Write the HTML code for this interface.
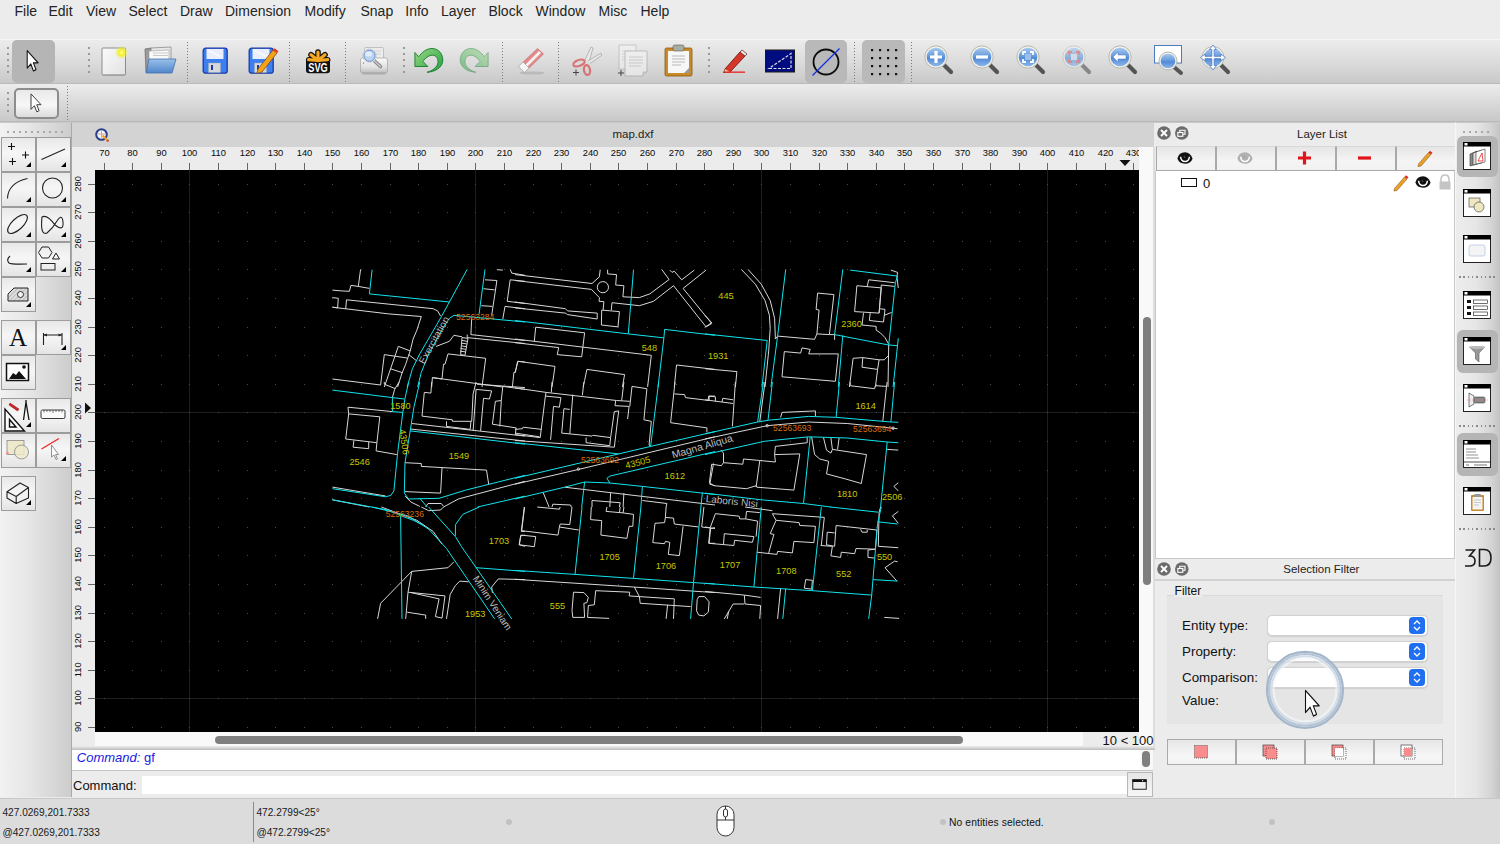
<!DOCTYPE html><html><head><meta charset="utf-8"><style>
*{margin:0;padding:0;box-sizing:border-box}
html,body{width:1500px;height:844px;overflow:hidden;background:#ececec;font-family:"Liberation Sans",sans-serif;position:relative}
.a{position:absolute}
.t{position:absolute;white-space:nowrap;line-height:1}
</style></head><body><div class="t" style="left:14.5px;top:4.15px;font-size:14px;color:#232323;">File</div>
<div class="t" style="left:48.5px;top:4.15px;font-size:14px;color:#232323;">Edit</div>
<div class="t" style="left:86px;top:4.15px;font-size:14px;color:#232323;">View</div>
<div class="t" style="left:128.5px;top:4.15px;font-size:14px;color:#232323;">Select</div>
<div class="t" style="left:180px;top:4.15px;font-size:14px;color:#232323;">Draw</div>
<div class="t" style="left:225px;top:4.15px;font-size:14px;color:#232323;">Dimension</div>
<div class="t" style="left:304.5px;top:4.15px;font-size:14px;color:#232323;">Modify</div>
<div class="t" style="left:360.5px;top:4.15px;font-size:14px;color:#232323;">Snap</div>
<div class="t" style="left:405.3px;top:4.15px;font-size:14px;color:#232323;">Info</div>
<div class="t" style="left:441px;top:4.15px;font-size:14px;color:#232323;">Layer</div>
<div class="t" style="left:488.4px;top:4.15px;font-size:14px;color:#232323;">Block</div>
<div class="t" style="left:535.5px;top:4.15px;font-size:14px;color:#232323;">Window</div>
<div class="t" style="left:598.5px;top:4.15px;font-size:14px;color:#232323;">Misc</div>
<div class="t" style="left:640.5px;top:4.15px;font-size:14px;color:#232323;">Help</div>
<div class="a" style="left:0px;top:39px;width:1500px;height:45px;background:linear-gradient(#ececec,#dcdcdc 50%,#c9c9c9);border-top:1px solid #f6f6f6;border-bottom:1px solid #b9b9b9"></div>
<div class="a" style="left:0px;top:84px;width:1500px;height:38px;background:linear-gradient(#ececec,#dadada 50%,#c8c8c8);border-bottom:1px solid #b9b9b9"></div>
<div class="a" style="left:7px;top:47px;width:2px;height:2px;background:#9a9a9a"></div>
<div class="a" style="left:7px;top:53px;width:2px;height:2px;background:#9a9a9a"></div>
<div class="a" style="left:7px;top:59px;width:2px;height:2px;background:#9a9a9a"></div>
<div class="a" style="left:7px;top:65px;width:2px;height:2px;background:#9a9a9a"></div>
<div class="a" style="left:7px;top:71px;width:2px;height:2px;background:#9a9a9a"></div>
<div class="a" style="left:88px;top:47px;width:2px;height:2px;background:#9a9a9a"></div>
<div class="a" style="left:88px;top:53px;width:2px;height:2px;background:#9a9a9a"></div>
<div class="a" style="left:88px;top:59px;width:2px;height:2px;background:#9a9a9a"></div>
<div class="a" style="left:88px;top:65px;width:2px;height:2px;background:#9a9a9a"></div>
<div class="a" style="left:88px;top:71px;width:2px;height:2px;background:#9a9a9a"></div>
<div class="a" style="left:403px;top:47px;width:2px;height:2px;background:#9a9a9a"></div>
<div class="a" style="left:403px;top:53px;width:2px;height:2px;background:#9a9a9a"></div>
<div class="a" style="left:403px;top:59px;width:2px;height:2px;background:#9a9a9a"></div>
<div class="a" style="left:403px;top:65px;width:2px;height:2px;background:#9a9a9a"></div>
<div class="a" style="left:403px;top:71px;width:2px;height:2px;background:#9a9a9a"></div>
<div class="a" style="left:708px;top:47px;width:2px;height:2px;background:#9a9a9a"></div>
<div class="a" style="left:708px;top:53px;width:2px;height:2px;background:#9a9a9a"></div>
<div class="a" style="left:708px;top:59px;width:2px;height:2px;background:#9a9a9a"></div>
<div class="a" style="left:708px;top:65px;width:2px;height:2px;background:#9a9a9a"></div>
<div class="a" style="left:708px;top:71px;width:2px;height:2px;background:#9a9a9a"></div>
<div class="a" style="left:187px;top:42px;width:1px;height:1px;background:#7a7a7a"></div><div class="a" style="left:187px;top:45px;width:1px;height:1px;background:#7a7a7a"></div><div class="a" style="left:187px;top:48px;width:1px;height:1px;background:#7a7a7a"></div><div class="a" style="left:187px;top:51px;width:1px;height:1px;background:#7a7a7a"></div><div class="a" style="left:187px;top:54px;width:1px;height:1px;background:#7a7a7a"></div><div class="a" style="left:187px;top:57px;width:1px;height:1px;background:#7a7a7a"></div><div class="a" style="left:187px;top:60px;width:1px;height:1px;background:#7a7a7a"></div><div class="a" style="left:187px;top:63px;width:1px;height:1px;background:#7a7a7a"></div><div class="a" style="left:187px;top:66px;width:1px;height:1px;background:#7a7a7a"></div><div class="a" style="left:187px;top:69px;width:1px;height:1px;background:#7a7a7a"></div><div class="a" style="left:187px;top:72px;width:1px;height:1px;background:#7a7a7a"></div><div class="a" style="left:187px;top:75px;width:1px;height:1px;background:#7a7a7a"></div><div class="a" style="left:187px;top:78px;width:1px;height:1px;background:#7a7a7a"></div><div class="a" style="left:187px;top:81px;width:1px;height:1px;background:#7a7a7a"></div>
<div class="a" style="left:289px;top:42px;width:1px;height:1px;background:#7a7a7a"></div><div class="a" style="left:289px;top:45px;width:1px;height:1px;background:#7a7a7a"></div><div class="a" style="left:289px;top:48px;width:1px;height:1px;background:#7a7a7a"></div><div class="a" style="left:289px;top:51px;width:1px;height:1px;background:#7a7a7a"></div><div class="a" style="left:289px;top:54px;width:1px;height:1px;background:#7a7a7a"></div><div class="a" style="left:289px;top:57px;width:1px;height:1px;background:#7a7a7a"></div><div class="a" style="left:289px;top:60px;width:1px;height:1px;background:#7a7a7a"></div><div class="a" style="left:289px;top:63px;width:1px;height:1px;background:#7a7a7a"></div><div class="a" style="left:289px;top:66px;width:1px;height:1px;background:#7a7a7a"></div><div class="a" style="left:289px;top:69px;width:1px;height:1px;background:#7a7a7a"></div><div class="a" style="left:289px;top:72px;width:1px;height:1px;background:#7a7a7a"></div><div class="a" style="left:289px;top:75px;width:1px;height:1px;background:#7a7a7a"></div><div class="a" style="left:289px;top:78px;width:1px;height:1px;background:#7a7a7a"></div><div class="a" style="left:289px;top:81px;width:1px;height:1px;background:#7a7a7a"></div>
<div class="a" style="left:345px;top:42px;width:1px;height:1px;background:#7a7a7a"></div><div class="a" style="left:345px;top:45px;width:1px;height:1px;background:#7a7a7a"></div><div class="a" style="left:345px;top:48px;width:1px;height:1px;background:#7a7a7a"></div><div class="a" style="left:345px;top:51px;width:1px;height:1px;background:#7a7a7a"></div><div class="a" style="left:345px;top:54px;width:1px;height:1px;background:#7a7a7a"></div><div class="a" style="left:345px;top:57px;width:1px;height:1px;background:#7a7a7a"></div><div class="a" style="left:345px;top:60px;width:1px;height:1px;background:#7a7a7a"></div><div class="a" style="left:345px;top:63px;width:1px;height:1px;background:#7a7a7a"></div><div class="a" style="left:345px;top:66px;width:1px;height:1px;background:#7a7a7a"></div><div class="a" style="left:345px;top:69px;width:1px;height:1px;background:#7a7a7a"></div><div class="a" style="left:345px;top:72px;width:1px;height:1px;background:#7a7a7a"></div><div class="a" style="left:345px;top:75px;width:1px;height:1px;background:#7a7a7a"></div><div class="a" style="left:345px;top:78px;width:1px;height:1px;background:#7a7a7a"></div><div class="a" style="left:345px;top:81px;width:1px;height:1px;background:#7a7a7a"></div>
<div class="a" style="left:502px;top:42px;width:1px;height:1px;background:#7a7a7a"></div><div class="a" style="left:502px;top:45px;width:1px;height:1px;background:#7a7a7a"></div><div class="a" style="left:502px;top:48px;width:1px;height:1px;background:#7a7a7a"></div><div class="a" style="left:502px;top:51px;width:1px;height:1px;background:#7a7a7a"></div><div class="a" style="left:502px;top:54px;width:1px;height:1px;background:#7a7a7a"></div><div class="a" style="left:502px;top:57px;width:1px;height:1px;background:#7a7a7a"></div><div class="a" style="left:502px;top:60px;width:1px;height:1px;background:#7a7a7a"></div><div class="a" style="left:502px;top:63px;width:1px;height:1px;background:#7a7a7a"></div><div class="a" style="left:502px;top:66px;width:1px;height:1px;background:#7a7a7a"></div><div class="a" style="left:502px;top:69px;width:1px;height:1px;background:#7a7a7a"></div><div class="a" style="left:502px;top:72px;width:1px;height:1px;background:#7a7a7a"></div><div class="a" style="left:502px;top:75px;width:1px;height:1px;background:#7a7a7a"></div><div class="a" style="left:502px;top:78px;width:1px;height:1px;background:#7a7a7a"></div><div class="a" style="left:502px;top:81px;width:1px;height:1px;background:#7a7a7a"></div>
<div class="a" style="left:558px;top:42px;width:1px;height:1px;background:#7a7a7a"></div><div class="a" style="left:558px;top:45px;width:1px;height:1px;background:#7a7a7a"></div><div class="a" style="left:558px;top:48px;width:1px;height:1px;background:#7a7a7a"></div><div class="a" style="left:558px;top:51px;width:1px;height:1px;background:#7a7a7a"></div><div class="a" style="left:558px;top:54px;width:1px;height:1px;background:#7a7a7a"></div><div class="a" style="left:558px;top:57px;width:1px;height:1px;background:#7a7a7a"></div><div class="a" style="left:558px;top:60px;width:1px;height:1px;background:#7a7a7a"></div><div class="a" style="left:558px;top:63px;width:1px;height:1px;background:#7a7a7a"></div><div class="a" style="left:558px;top:66px;width:1px;height:1px;background:#7a7a7a"></div><div class="a" style="left:558px;top:69px;width:1px;height:1px;background:#7a7a7a"></div><div class="a" style="left:558px;top:72px;width:1px;height:1px;background:#7a7a7a"></div><div class="a" style="left:558px;top:75px;width:1px;height:1px;background:#7a7a7a"></div><div class="a" style="left:558px;top:78px;width:1px;height:1px;background:#7a7a7a"></div><div class="a" style="left:558px;top:81px;width:1px;height:1px;background:#7a7a7a"></div>
<div class="a" style="left:854px;top:42px;width:1px;height:1px;background:#7a7a7a"></div><div class="a" style="left:854px;top:45px;width:1px;height:1px;background:#7a7a7a"></div><div class="a" style="left:854px;top:48px;width:1px;height:1px;background:#7a7a7a"></div><div class="a" style="left:854px;top:51px;width:1px;height:1px;background:#7a7a7a"></div><div class="a" style="left:854px;top:54px;width:1px;height:1px;background:#7a7a7a"></div><div class="a" style="left:854px;top:57px;width:1px;height:1px;background:#7a7a7a"></div><div class="a" style="left:854px;top:60px;width:1px;height:1px;background:#7a7a7a"></div><div class="a" style="left:854px;top:63px;width:1px;height:1px;background:#7a7a7a"></div><div class="a" style="left:854px;top:66px;width:1px;height:1px;background:#7a7a7a"></div><div class="a" style="left:854px;top:69px;width:1px;height:1px;background:#7a7a7a"></div><div class="a" style="left:854px;top:72px;width:1px;height:1px;background:#7a7a7a"></div><div class="a" style="left:854px;top:75px;width:1px;height:1px;background:#7a7a7a"></div><div class="a" style="left:854px;top:78px;width:1px;height:1px;background:#7a7a7a"></div><div class="a" style="left:854px;top:81px;width:1px;height:1px;background:#7a7a7a"></div>
<div class="a" style="left:911px;top:42px;width:1px;height:1px;background:#7a7a7a"></div><div class="a" style="left:911px;top:45px;width:1px;height:1px;background:#7a7a7a"></div><div class="a" style="left:911px;top:48px;width:1px;height:1px;background:#7a7a7a"></div><div class="a" style="left:911px;top:51px;width:1px;height:1px;background:#7a7a7a"></div><div class="a" style="left:911px;top:54px;width:1px;height:1px;background:#7a7a7a"></div><div class="a" style="left:911px;top:57px;width:1px;height:1px;background:#7a7a7a"></div><div class="a" style="left:911px;top:60px;width:1px;height:1px;background:#7a7a7a"></div><div class="a" style="left:911px;top:63px;width:1px;height:1px;background:#7a7a7a"></div><div class="a" style="left:911px;top:66px;width:1px;height:1px;background:#7a7a7a"></div><div class="a" style="left:911px;top:69px;width:1px;height:1px;background:#7a7a7a"></div><div class="a" style="left:911px;top:72px;width:1px;height:1px;background:#7a7a7a"></div><div class="a" style="left:911px;top:75px;width:1px;height:1px;background:#7a7a7a"></div><div class="a" style="left:911px;top:78px;width:1px;height:1px;background:#7a7a7a"></div><div class="a" style="left:911px;top:81px;width:1px;height:1px;background:#7a7a7a"></div>
<div class="a" style="left:7px;top:92px;width:2px;height:2px;background:#9a9a9a"></div>
<div class="a" style="left:7px;top:98px;width:2px;height:2px;background:#9a9a9a"></div>
<div class="a" style="left:7px;top:104px;width:2px;height:2px;background:#9a9a9a"></div>
<div class="a" style="left:7px;top:110px;width:2px;height:2px;background:#9a9a9a"></div>
<div class="a" style="left:67px;top:86px;width:1px;height:1px;background:#7a7a7a"></div><div class="a" style="left:67px;top:89px;width:1px;height:1px;background:#7a7a7a"></div><div class="a" style="left:67px;top:92px;width:1px;height:1px;background:#7a7a7a"></div><div class="a" style="left:67px;top:95px;width:1px;height:1px;background:#7a7a7a"></div><div class="a" style="left:67px;top:98px;width:1px;height:1px;background:#7a7a7a"></div><div class="a" style="left:67px;top:101px;width:1px;height:1px;background:#7a7a7a"></div><div class="a" style="left:67px;top:104px;width:1px;height:1px;background:#7a7a7a"></div><div class="a" style="left:67px;top:107px;width:1px;height:1px;background:#7a7a7a"></div><div class="a" style="left:67px;top:110px;width:1px;height:1px;background:#7a7a7a"></div><div class="a" style="left:67px;top:113px;width:1px;height:1px;background:#7a7a7a"></div><div class="a" style="left:67px;top:116px;width:1px;height:1px;background:#7a7a7a"></div><div class="a" style="left:67px;top:119px;width:1px;height:1px;background:#7a7a7a"></div>
<div class="a" style="left:12px;top:40px;width:43px;height:43px;background:#b5b5b5;border-radius:5px"></div>
<div class="a" style="left:805px;top:40px;width:42px;height:43px;background:#b9b9b9;border-radius:5px"></div>
<div class="a" style="left:862px;top:40px;width:43px;height:43px;background:#b9b9b9;border-radius:5px"></div>
<div class="a" style="left:14px;top:88px;width:45px;height:31px;border:2px solid #8d8d8d;border-radius:5px;background:linear-gradient(#e9e9e9,#f7f7f7 55%,#dcdcdc)"></div>
<svg class="a" style="left:26px;top:50px;" width="14" height="23" viewBox="0 0 14 23"><path d="M0,0 L0,15.5 L3.8,11.8 L6.6,18 L9.2,16.8 L6.5,10.8 L11.4,10.8 Z" transform="translate(1.2,0.6) scale(0.95,1.13)" fill="#fff" stroke="#111" stroke-width="1.1" stroke-linejoin="round"/></svg>
<svg class="a" style="left:30px;top:93px;" width="13" height="21" viewBox="0 0 13 21"><path d="M0,0 L0,15.5 L3.8,11.8 L6.6,18 L9.2,16.8 L6.5,10.8 L11.4,10.8 Z" transform="translate(1,0.9) scale(0.88,1.0)" fill="#fff" stroke="#333" stroke-width="1" stroke-linejoin="round"/></svg>
<svg class="a" style="left:100px;top:46px;" width="28" height="31" viewBox="0 0 28 31"><defs><radialGradient id="glow"><stop offset="0" stop-color="#ffffa0"/><stop offset="0.45" stop-color="#f4ef2a"/><stop offset="1" stop-color="#f4ef2a" stop-opacity="0"/></radialGradient>
<linearGradient id="pg" x1="0" y1="0" x2="1" y2="1"><stop offset="0" stop-color="#fafafa"/><stop offset="1" stop-color="#e2e2e2"/></linearGradient></defs>
<rect x="2" y="2" width="23.5" height="27" rx="1" fill="url(#pg)" stroke="#8c8c8c" stroke-width="1"/>
<rect x="3" y="28.5" width="22" height="1.5" fill="#9a9a9a" opacity="0.6"/>
<circle cx="21.5" cy="6.5" r="6.5" fill="url(#glow)"/></svg>
<svg class="a" style="left:143px;top:45px;" width="34" height="31" viewBox="0 0 34 31"><defs><linearGradient id="fb" x1="0" y1="0" x2="0" y2="1"><stop offset="0" stop-color="#9cc0ea"/><stop offset="1" stop-color="#4f86c9"/></linearGradient></defs>
<path d="M2,4 L8,3 L8,26 L3,27 Z" fill="#9a9a9a" stroke="#6e6e6e" stroke-width="0.8"/>
<path d="M8,3 L28,2 L28,20 L8,20 Z" fill="#e8e8e8" stroke="#8a8a8a" stroke-width="0.8"/>
<path d="M6,6 L26,5 L26,22 L6,22 Z" fill="#fafafa" stroke="#9a9a9a" stroke-width="0.6"/>
<path d="M10,8 L25,8 M10,10.5 L25,10.5" stroke="#bbb" stroke-width="0.8"/>
<path d="M6,14 L33,14 L29,28 L3,28 Z" fill="url(#fb)" stroke="#3f6fae" stroke-width="0.8"/></svg>
<svg class="a" style="left:202px;top:47px;" width="27" height="28" viewBox="0 0 27 28"><g transform="translate(0.5,0.5)"><rect x="0.7" y="0.7" width="24" height="25" rx="2.5" fill="#3d7ff0" stroke="#1a3aa8" stroke-width="1.3"/>
<rect x="4" y="1.5" width="17" height="10" fill="#e8eefa"/><path d="M5,2.5 L18,9" stroke="#fff" stroke-width="1.5" opacity="0.7"/>
<rect x="6" y="15.5" width="12" height="9.5" fill="#d8d8d8" stroke="#9aa" stroke-width="0.4"/><rect x="8.5" y="17.5" width="2" height="5" fill="#1a3aa8"/></g></svg>
<svg class="a" style="left:248px;top:45px;" width="31" height="31" viewBox="0 0 31 31"><g transform="translate(0.5,2.5)"><rect x="0.7" y="0.7" width="24" height="25" rx="2.5" fill="#3d7ff0" stroke="#1a3aa8" stroke-width="1.3"/>
<rect x="4" y="1.5" width="17" height="10" fill="#e8eefa"/><path d="M5,2.5 L18,9" stroke="#fff" stroke-width="1.5" opacity="0.7"/>
<rect x="6" y="15.5" width="12" height="9.5" fill="#d8d8d8" stroke="#9aa" stroke-width="0.4"/><rect x="8.5" y="17.5" width="2" height="5" fill="#1a3aa8"/></g><path d="M10,24 L25,5 L29,8 L14,27 L9,28.5 Z" fill="#f3a21a" stroke="#8a4a10" stroke-width="0.8"/><path d="M25,5 L26.5,3.2 L30.5,6.2 L29,8 Z" fill="#e23a2a"/></svg>
<svg class="a" style="left:305px;top:48px;" width="26" height="27" viewBox="0 0 26 27"><path d="M13,12.5 L13,4" stroke="#111" stroke-width="5.6" stroke-linecap="round"/><path d="M13,12.5 L6,6.7" stroke="#111" stroke-width="5.6" stroke-linecap="round"/><path d="M13,12.5 L20,6.7" stroke="#111" stroke-width="5.6" stroke-linecap="round"/><path d="M13,12.5 L3.7,11.7" stroke="#111" stroke-width="5.6" stroke-linecap="round"/><path d="M13,12.5 L22.7,11.7" stroke="#111" stroke-width="5.6" stroke-linecap="round"/><rect x="1" y="9.5" width="24" height="15.8" rx="3" fill="#111"/><path d="M13,12.5 L13,4" stroke="#f5a623" stroke-width="3.2" stroke-linecap="round"/><path d="M13,12.5 L6,6.7" stroke="#f5a623" stroke-width="3.2" stroke-linecap="round"/><path d="M13,12.5 L20,6.7" stroke="#f5a623" stroke-width="3.2" stroke-linecap="round"/><path d="M13,12.5 L3.7,11.7" stroke="#f5a623" stroke-width="3.2" stroke-linecap="round"/><path d="M13,12.5 L22.7,11.7" stroke="#f5a623" stroke-width="3.2" stroke-linecap="round"/><rect x="2.5" y="11.2" width="21" height="1.8" fill="#f5a623"/><text transform="translate(13,24) scale(0.68,1)" x="0" y="0" font-family="Liberation Sans" font-weight="bold" font-size="13.5" fill="#fff" text-anchor="middle">SVG</text></svg>
<svg class="a" style="left:359px;top:46px;" width="31" height="30" viewBox="0 0 31 30"><defs><linearGradient id="pr" x1="0" y1="0" x2="0" y2="1"><stop offset="0" stop-color="#fafafa"/><stop offset="0.6" stop-color="#e2e2e2"/><stop offset="1" stop-color="#bdbdbd"/></linearGradient></defs>
<rect x="5.5" y="1.5" width="19" height="13" rx="1" fill="#ececec" stroke="#b5b5b5" stroke-width="0.8"/><path d="M11,5 L22,5 M11,8 L22,8" stroke="#d0d0d0" stroke-width="1"/>
<path d="M1.5,14 Q1.5,12 3.5,12 L26.5,12 Q28.5,12 28.5,14 L28.5,25 Q28.5,27 26.5,27 L3.5,27 Q1.5,27 1.5,25 Z" fill="url(#pr)" stroke="#a9a9a9" stroke-width="0.8"/>
<rect x="3" y="26.5" width="24" height="2.2" rx="1" fill="#9a9a9a" opacity="0.5"/><circle cx="4.5" cy="17" r="0.6" fill="#555"/>
<path d="M15.5,15 L21.5,20.5" stroke="#888" stroke-width="3.6" stroke-linecap="round"/><path d="M15.5,15 L21.5,20.5" stroke="#c8c8c8" stroke-width="1.6" stroke-linecap="round"/>
<circle cx="10.5" cy="9.7" r="6.8" fill="#f2f2f2" stroke="#c0c0c0" stroke-width="0.6"/><circle cx="10.5" cy="9.7" r="5.6" fill="#bcd3ee" stroke="#5d8ed0" stroke-width="1"/><ellipse cx="9.5" cy="8" rx="3.5" ry="2.5" fill="#e8f1fb" opacity="0.85"/></svg>
<svg class="a" style="left:410px;top:44px;" width="36" height="32" viewBox="0 0 36 32"><defs><linearGradient id="ug" x1="0" y1="0" x2="1" y2="1"><stop offset="0" stop-color="#9ad884"/><stop offset="1" stop-color="#22a040"/></linearGradient></defs><g  opacity="1.0"><path d="M17,28.3 C24,28 33,24 32.8,16 C32.5,8 27,4.5 22,4.5 C16,4.5 11.5,9 8.7,12.7 L4.9,8.5 L4.9,22.5 L17.8,22.5 L12.9,17.4 C15,14.5 18.5,11.2 22.7,11.2 C26,11.2 28.2,14.5 28,18.2 C27.8,23 22,27 17,28.3 Z" fill="url(#ug)" stroke="#157a2a" stroke-width="0.9" stroke-linejoin="round"/></g></svg>
<svg class="a" style="left:457px;top:44px;" width="36" height="32" viewBox="0 0 36 32"><defs><linearGradient id="rg" x1="0" y1="0" x2="1" y2="1"><stop offset="0" stop-color="#9ad884"/><stop offset="1" stop-color="#22a040"/></linearGradient></defs><g transform="translate(36,0) scale(-1,1)" opacity="0.5"><path d="M17,28.3 C24,28 33,24 32.8,16 C32.5,8 27,4.5 22,4.5 C16,4.5 11.5,9 8.7,12.7 L4.9,8.5 L4.9,22.5 L17.8,22.5 L12.9,17.4 C15,14.5 18.5,11.2 22.7,11.2 C26,11.2 28.2,14.5 28,18.2 C27.8,23 22,27 17,28.3 Z" fill="url(#rg)" stroke="#157a2a" stroke-width="0.9" stroke-linejoin="round"/></g></svg>
<svg class="a" style="left:517px;top:47px;" width="30" height="29" viewBox="0 0 30 29"><ellipse cx="15" cy="26" rx="12.5" ry="1.6" fill="#b4b4b4" opacity="0.8"/><path d="M1.5,19.5 L7.5,25.5 L26.5,7 L20.5,1.5 Z" fill="#e38a8a" stroke="#c07070" stroke-width="0.7"/><path d="M5,17 L10.5,22.5 L25.5,8 L20,2.5 Z" fill="none"/><path d="M7.5,20.5 L23,5" stroke="#f2f2f2" stroke-width="2.6"/><path d="M1.5,19.5 L7.5,25.5 L12,21 L6,15 Z" fill="#f5f5f5" stroke="#aaa" stroke-width="0.7"/></svg>
<svg class="a" style="left:571px;top:45px;" width="32" height="31" viewBox="0 0 32 31"><g opacity="0.62"><path d="M14,15 L20,2 L22,3 L18,17" fill="#eee" stroke="#777" stroke-width="0.7"/><path d="M17,16 L30,8 L30.5,10.5 L19,18.5" fill="#eee" stroke="#777" stroke-width="0.7"/>
<ellipse cx="8" cy="18" rx="6" ry="3" fill="none" stroke="#d8383a" stroke-width="2.2" transform="rotate(-20 8 18)"/><ellipse cx="16" cy="25" rx="3" ry="5" fill="none" stroke="#d8383a" stroke-width="2.2" transform="rotate(-10 16 25)"/></g>
<path d="M2,27.5 L8,27.5 M5,24.5 L5,30.5" stroke="#444" stroke-width="1"/></svg>
<svg class="a" style="left:617px;top:44px;" width="32" height="33" viewBox="0 0 32 33"><g opacity="0.55"><path d="M2,1 L19,1 L19,25 L2,25 Z" fill="#f4f4f4" stroke="#9a9a9a" stroke-width="0.8"/><path d="M5,7 L14,7 M5,10 L14,10 M5,13 L14,13 M5,16 L12,16" stroke="#bbb" stroke-width="0.8"/>
<path d="M8,7 L30,7 L30,28 L26,32 L8,32 Z" fill="#f7f7f7" stroke="#8a8a8a" stroke-width="0.8"/><path d="M12,13 L26,13 M12,16 L26,16 M12,19 L26,19 M12,22 L24,22" stroke="#aaa" stroke-width="0.8"/><path d="M26,32 L26,28 L30,28" fill="#ccc" stroke="#888" stroke-width="0.6"/></g>
<path d="M1,29 L7,29 M4,26 L4,32" stroke="#444" stroke-width="1"/></svg>
<svg class="a" style="left:664px;top:44px;" width="30" height="33" viewBox="0 0 30 33"><rect x="1" y="4" width="27" height="28" rx="1.5" fill="#c98a2a" stroke="#8a5a10" stroke-width="0.8"/>
<rect x="4" y="7" width="21" height="22" fill="#f7f7f7"/><path d="M8,12 L21,12 M8,15 L21,15 M8,18 L21,18 M8,21 L17,21" stroke="#aaa" stroke-width="0.8"/>
<path d="M20,29 L25,24 L25,29 Z" fill="#9a9a9a"/>
<rect x="9" y="1" width="11" height="6" rx="1.5" fill="#a9aca0" stroke="#5a5a50" stroke-width="0.6"/></svg>
<svg class="a" style="left:722px;top:48px;" width="25" height="25" viewBox="0 0 25 25"><path d="M3,21 L18,4 L23,8 L8,24 L2,25 Z" fill="#d8352a" stroke="#6a1a10" stroke-width="0.9"/><path d="M18,4 L20,2 L25,6 L23,8 Z" fill="#e8e8e8" stroke="#6a1a10" stroke-width="0.7"/><path d="M3,21 L8,24 L2,25 Z" fill="#e8c89a"/><path d="M2,23.5 L3.5,25 L2,25Z" fill="#222"/>
<rect x="1" y="23.5" width="22" height="1.3" fill="#e8201a"/></svg>
<svg class="a" style="left:765px;top:49px;" width="31" height="25" viewBox="0 0 31 25"><rect x="0.5" y="1" width="29" height="22" fill="#000c80" stroke="#1a1a1a" stroke-width="1"/><path d="M4,19.5 L26,19.5 L26,4.5 Z" fill="none" stroke="#ddd" stroke-width="1.2" stroke-dasharray="3 1.5"/></svg>
<svg class="a" style="left:810px;top:46px;" width="32" height="32" viewBox="0 0 32 32"><circle cx="16" cy="16" r="12.5" fill="none" stroke="#0a0a0a" stroke-width="1.8"/><path d="M2.5,29.5 L29.5,2.5" stroke="#1030e8" stroke-width="1.2"/></svg>
<svg class="a" style="left:870px;top:48px;" width="30" height="30" viewBox="0 0 30 30"><rect x="1" y="1" width="2.2" height="2.2" fill="#111"/><rect x="1" y="9" width="2.2" height="2.2" fill="#111"/><rect x="1" y="17" width="2.2" height="2.2" fill="#111"/><rect x="1" y="25" width="2.2" height="2.2" fill="#111"/><rect x="9" y="1" width="2.2" height="2.2" fill="#111"/><rect x="9" y="9" width="2.2" height="2.2" fill="#111"/><rect x="9" y="17" width="2.2" height="2.2" fill="#111"/><rect x="9" y="25" width="2.2" height="2.2" fill="#111"/><rect x="17" y="1" width="2.2" height="2.2" fill="#111"/><rect x="17" y="9" width="2.2" height="2.2" fill="#111"/><rect x="17" y="17" width="2.2" height="2.2" fill="#111"/><rect x="17" y="25" width="2.2" height="2.2" fill="#111"/><rect x="25" y="1" width="2.2" height="2.2" fill="#111"/><rect x="25" y="9" width="2.2" height="2.2" fill="#111"/><rect x="25" y="17" width="2.2" height="2.2" fill="#111"/><rect x="25" y="25" width="2.2" height="2.2" fill="#111"/></svg>
<svg class="a" style="left:0px;top:0px;" width="1500" height="90" viewBox="0 0 1500 90"><defs><linearGradient id="zb" x1="0" y1="0" x2="0" y2="1"><stop offset="0" stop-color="#a9c8ee"/><stop offset="0.5" stop-color="#5f97dc"/><stop offset="0.55" stop-color="#4f88d6"/><stop offset="1" stop-color="#8db6ea"/></linearGradient></defs><g opacity="1.0"><path d="M944,65 L951,72" stroke="#555" stroke-width="4.2" stroke-linecap="round"/><circle cx="936" cy="57" r="11.2" fill="#f0f0ea" stroke="#b8b8b0" stroke-width="1"/>
<circle cx="936" cy="57" r="9.3" fill="url(#zb)"/><path d="M930,57 L942,57 M936,51 L936,63" stroke="#fff" stroke-width="3.2"/></g><g opacity="1.0"><path d="M990,65 L997,72" stroke="#555" stroke-width="4.2" stroke-linecap="round"/><circle cx="982" cy="57" r="11.2" fill="#f0f0ea" stroke="#b8b8b0" stroke-width="1"/>
<circle cx="982" cy="57" r="9.3" fill="url(#zb)"/><path d="M976,57 L988,57" stroke="#fff" stroke-width="3.2"/></g><g opacity="1.0"><path d="M1036,65 L1043,72" stroke="#555" stroke-width="4.2" stroke-linecap="round"/><circle cx="1028" cy="57" r="11.2" fill="#f0f0ea" stroke="#b8b8b0" stroke-width="1"/>
<circle cx="1028" cy="57" r="9.3" fill="url(#zb)"/><path d="M1023,55 L1023,52 L1026,52 M1030,52 L1033,52 L1033,55 M1033,59 L1033,62 L1030,62 M1026,62 L1023,62 L1023,59" stroke="#fff" stroke-width="1.8" fill="none"/><rect x="1025" y="54" width="6" height="6" fill="#9cbfe8"/></g><g opacity="0.6"><path d="M1082,65 L1089,72" stroke="#555" stroke-width="4.2" stroke-linecap="round"/><circle cx="1074" cy="57" r="11.2" fill="#f0f0ea" stroke="#b8b8b0" stroke-width="1"/>
<circle cx="1074" cy="57" r="9.3" fill="url(#zb)"/><path d="M1069,55 L1069,52 L1072,52 M1076,52 L1079,52 L1079,55 M1079,59 L1079,62 L1076,62 M1072,62 L1069,62 L1069,59" stroke="#e05050" stroke-width="1.8" fill="none"/><rect x="1071" y="54" width="6" height="6" fill="#c8d8ee"/></g><g opacity="1.0"><path d="M1128,65 L1135,72" stroke="#555" stroke-width="4.2" stroke-linecap="round"/><circle cx="1120" cy="57" r="11.2" fill="#f0f0ea" stroke="#b8b8b0" stroke-width="1"/>
<circle cx="1120" cy="57" r="9.3" fill="url(#zb)"/><path d="M1113,57 L1118,52 L1118,55 L1126,55 L1126,59 L1118,59 L1118,62 Z" fill="#fff" stroke="#4a7ac0" stroke-width="0.5"/></g><rect x="1154.5" y="45.5" width="27" height="17.5" fill="#fff" stroke="#4a7ac0" stroke-width="1"/><path d="M1174,67 L1181,73" stroke="#555" stroke-width="4" stroke-linecap="round"/><circle cx="1168" cy="61" r="9" fill="#f0f0ea" stroke="#b8b8b0" stroke-width="1"/><circle cx="1168" cy="61" r="7.3" fill="url(#zb)"/><path d="M1221,65 L1228,72" stroke="#555" stroke-width="4.2" stroke-linecap="round"/><circle cx="1213" cy="57.5" r="11" fill="#f0f0ea" stroke="#b8b8b0" stroke-width="1"/><circle cx="1213" cy="57.5" r="9.2" fill="url(#zb)"/><path d="M1213,45 L1216.5,49.5 L1214.2,49.5 L1214.2,56.3 L1221,56.3 L1221,54 L1225.5,57.5 L1221,61 L1221,58.7 L1214.2,58.7 L1214.2,65.5 L1216.5,65.5 L1213,70 L1209.5,65.5 L1211.8,65.5 L1211.8,58.7 L1205,58.7 L1205,61 L1200.5,57.5 L1205,54 L1205,56.3 L1211.8,56.3 L1211.8,49.5 L1209.5,49.5 Z" fill="#fff" stroke="#4a7ac0" stroke-width="0.8"/></svg>
<div class="a" style="left:0px;top:122px;width:72px;height:675px;background:linear-gradient(90deg,#f2f2f2,#e6e6e6 40%,#cdcdcd);border-right:1px solid #a9a9a9;border-top:1px solid #c8c8c8"></div>
<div class="a" style="left:7px;top:131px;width:2px;height:2px;background:#a8a8a8"></div>
<div class="a" style="left:13px;top:131px;width:2px;height:2px;background:#a8a8a8"></div>
<div class="a" style="left:19px;top:131px;width:2px;height:2px;background:#a8a8a8"></div>
<div class="a" style="left:25px;top:131px;width:2px;height:2px;background:#a8a8a8"></div>
<div class="a" style="left:31px;top:131px;width:2px;height:2px;background:#a8a8a8"></div>
<div class="a" style="left:37px;top:131px;width:2px;height:2px;background:#a8a8a8"></div>
<div class="a" style="left:43px;top:131px;width:2px;height:2px;background:#a8a8a8"></div>
<div class="a" style="left:49px;top:131px;width:2px;height:2px;background:#a8a8a8"></div>
<div class="a" style="left:55px;top:131px;width:2px;height:2px;background:#a8a8a8"></div>
<div class="a" style="left:61px;top:131px;width:2px;height:2px;background:#a8a8a8"></div>
<div class="a" style="left:1px;top:137px;width:35px;height:35px;border:1px solid #9c9c9c;background:linear-gradient(#e8e8e8,#f6f6f6 45%,#f2f2f2 60%,#e4e4e4)"></div>
<div class="a" style="left:36px;top:137px;width:35px;height:35px;border:1px solid #9c9c9c;background:linear-gradient(#e8e8e8,#f6f6f6 45%,#f2f2f2 60%,#e4e4e4)"></div>
<div class="a" style="left:1px;top:172px;width:35px;height:35px;border:1px solid #9c9c9c;background:linear-gradient(#e8e8e8,#f6f6f6 45%,#f2f2f2 60%,#e4e4e4)"></div>
<div class="a" style="left:36px;top:172px;width:35px;height:35px;border:1px solid #9c9c9c;background:linear-gradient(#e8e8e8,#f6f6f6 45%,#f2f2f2 60%,#e4e4e4)"></div>
<div class="a" style="left:1px;top:207px;width:35px;height:35px;border:1px solid #9c9c9c;background:linear-gradient(#e8e8e8,#f6f6f6 45%,#f2f2f2 60%,#e4e4e4)"></div>
<div class="a" style="left:36px;top:207px;width:35px;height:35px;border:1px solid #9c9c9c;background:linear-gradient(#e8e8e8,#f6f6f6 45%,#f2f2f2 60%,#e4e4e4)"></div>
<div class="a" style="left:1px;top:242px;width:35px;height:35px;border:1px solid #9c9c9c;background:linear-gradient(#e8e8e8,#f6f6f6 45%,#f2f2f2 60%,#e4e4e4)"></div>
<div class="a" style="left:36px;top:242px;width:35px;height:35px;border:1px solid #9c9c9c;background:linear-gradient(#e8e8e8,#f6f6f6 45%,#f2f2f2 60%,#e4e4e4)"></div>
<div class="a" style="left:1px;top:277px;width:35px;height:35px;border:1px solid #9c9c9c;background:linear-gradient(#e8e8e8,#f6f6f6 45%,#f2f2f2 60%,#e4e4e4)"></div>
<div class="a" style="left:1px;top:320px;width:35px;height:35px;border:1px solid #9c9c9c;background:linear-gradient(#e8e8e8,#f6f6f6 45%,#f2f2f2 60%,#e4e4e4)"></div>
<div class="a" style="left:36px;top:320px;width:35px;height:35px;border:1px solid #9c9c9c;background:linear-gradient(#e8e8e8,#f6f6f6 45%,#f2f2f2 60%,#e4e4e4)"></div>
<div class="a" style="left:1px;top:355px;width:35px;height:35px;border:1px solid #9c9c9c;background:linear-gradient(#e8e8e8,#f6f6f6 45%,#f2f2f2 60%,#e4e4e4)"></div>
<div class="a" style="left:1px;top:398px;width:35px;height:35px;border:1px solid #9c9c9c;background:linear-gradient(#e8e8e8,#f6f6f6 45%,#f2f2f2 60%,#e4e4e4)"></div>
<div class="a" style="left:36px;top:398px;width:35px;height:35px;border:1px solid #9c9c9c;background:linear-gradient(#e8e8e8,#f6f6f6 45%,#f2f2f2 60%,#e4e4e4)"></div>
<div class="a" style="left:1px;top:433px;width:35px;height:35px;border:1px solid #9c9c9c;background:linear-gradient(#e8e8e8,#f6f6f6 45%,#f2f2f2 60%,#e4e4e4)"></div>
<div class="a" style="left:36px;top:433px;width:35px;height:35px;border:1px solid #9c9c9c;background:linear-gradient(#e8e8e8,#f6f6f6 45%,#f2f2f2 60%,#e4e4e4)"></div>
<div class="a" style="left:1px;top:476px;width:35px;height:35px;border:1px solid #9c9c9c;background:linear-gradient(#e8e8e8,#f6f6f6 45%,#f2f2f2 60%,#e4e4e4)"></div>
<svg class="a" style="left:0px;top:122px;" width="72" height="400" viewBox="0 122 72 400"><path d="M8.0,146.5 L15.0,146.5 M11.5,143.0 L11.5,150.0" stroke="#111" stroke-width="1.1"/><path d="M22.0,155 L29.0,155 M25.5,151.5 L25.5,158.5" stroke="#111" stroke-width="1.1"/><path d="M9.0,161.5 L16.0,161.5 M12.5,158.0 L12.5,165.0" stroke="#111" stroke-width="1.1"/><path d="M31,167 L31,162 L26,167 Z" fill="#000"/><path d="M41.5,159.5 L65,149" stroke="#222" stroke-width="1.1"/><path d="M66,167 L66,162 L61,167 Z" fill="#000"/><path d="M7.5,198.5 Q8,183 27.5,178.5" fill="none" stroke="#222" stroke-width="1.1"/><path d="M31,202 L31,197 L26,202 Z" fill="#000"/><circle cx="52.5" cy="188" r="10" fill="none" stroke="#222" stroke-width="1.1"/><path d="M66,202 L66,197 L61,202 Z" fill="#000"/><ellipse cx="17.5" cy="224" rx="12.5" ry="5.5" transform="rotate(-43 17.5 224)" fill="none" stroke="#222" stroke-width="1.1"/><path d="M31,237 L31,232 L26,237 Z" fill="#000"/><path d="M42,217 Q40,236 47,233 Q53,228 57,221 Q62,213 63,222 Q64,232 55,225 Q47,214 42,217 Z" fill="none" stroke="#222" stroke-width="1.1"/><path d="M66,237 L66,232 L61,237 Z" fill="#000"/><path d="M10,256 Q6,260 9,263 Q11,264.5 27,264" fill="none" stroke="#222" stroke-width="1.1"/><path d="M31,272 L31,267 L26,272 Z" fill="#000"/><path d="M42,247 L48.5,247 L52,252.5 L48.5,258 L42,258 L38.5,252.5 Z M56,253 L59.5,259 L52.5,259 Z" fill="none" stroke="#222" stroke-width="1"/><rect x="41" y="263.5" width="14" height="6.5" fill="none" stroke="#222" stroke-width="1"/><path d="M66,272 L66,267 L61,272 Z" fill="#000"/><defs><pattern id="hp" width="3" height="3" patternUnits="userSpaceOnUse" patternTransform="rotate(45)"><rect width="3" height="3" fill="#ddd"/><path d="M0,0 L0,3" stroke="#888" stroke-width="0.8"/></pattern></defs><path d="M8,301 L8,294 L14,288 L28,288 L28,301 Z" fill="url(#hp)" stroke="#222" stroke-width="1"/><circle cx="20.5" cy="294.5" r="3" fill="#f4f4f4" stroke="#222" stroke-width="0.9"/><path d="M31,307 L31,302 L26,307 Z" fill="#000"/><text x="18" y="346" font-family="Liberation Serif" font-size="25" fill="#111" text-anchor="middle">A</text><path d="M43.5,333 L43.5,345 M62,333 L62,345 M43.5,335 L62,335" stroke="#222" stroke-width="1.1"/><path d="M43.5,335 L47,333.5 L47,336.5 Z M62,335 L58.5,333.5 L58.5,336.5 Z" fill="#222"/><path d="M66,350 L66,345 L61,350 Z" fill="#000"/><rect x="6.5" y="363.5" width="22" height="17" fill="#fff" stroke="#111" stroke-width="1.5"/><path d="M9,379 L13,373 L16,375 L19,371 L26,379 Z" fill="#111"/><circle cx="24" cy="367" r="1.8" fill="#111"/><path d="M5,431 L5,409 L24.5,431 Z M9.5,427 L9.5,419.5 L16,427 Z" fill="#fafafa" stroke="#111" stroke-width="1.4"/><path d="M10,403 L19,409 L17.5,411 L9,405 Z" fill="#d82020" stroke="#600" stroke-width="0.4"/><path d="M26,402 L23.5,420 M26,402 L29,420 M26,402 L26,400" stroke="#111" stroke-width="1.3"/><path d="M31,427 L31,422 L26,427 Z" fill="#000"/><rect x="41" y="410" width="24" height="8.5" rx="1.5" fill="#fafafa" stroke="#222" stroke-width="0.9"/><path d="M44,410 L44,412.5 M47,410 L47,412 M50,410 L50,412 M53,410 L53,413 M56,410 L56,412 M59,410 L59,412 M62,410 L62,412.5" stroke="#444" stroke-width="0.7"/><rect x="7" y="440.5" width="17" height="14" fill="#efe9cc" stroke="#888" stroke-width="0.8"/><circle cx="21.5" cy="452" r="7" fill="#efe9cc" fill-opacity="0.85" stroke="#888" stroke-width="0.8"/><circle cx="7.5" cy="453" r="1.3" fill="#f88"/><path d="M41.5,449 L59,438.5" stroke="#ee2222" stroke-width="1.2"/><path d="M51.5,445 L51.5,457 L54,455 L56,459.5 L57.5,458.8 L55.5,454.5 L58.5,454.5 Z" fill="#fff" stroke="#777" stroke-width="0.8"/><path d="M66,461 L66,456 L61,461 Z" fill="#000"/><path d="M7,491.7 L20,483 L28.5,487.5 L28.5,498 L16.2,503.5 L7,498 Z M7,491.7 L16.2,496.5 L28.5,487.5 M16.2,496.5 L16.2,503.5" fill="none" stroke="#222" stroke-width="1.1" stroke-linejoin="round"/><path d="M31,505 L31,500 L26,505 Z" fill="#000"/></svg>
<div class="a" style="left:72px;top:122px;width:1083px;height:675px;background:#ececec;border-top:1px solid #c8c8c8"></div>
<div class="a" style="left:72px;top:123px;width:1082px;height:24px;background:#d3d3d3"></div>
<div class="t" style="left:612.5px;top:129.27px;font-size:11.5px;color:#222;">map.dxf</div>
<svg class="a" style="left:95px;top:128px;" width="15" height="15" viewBox="0 0 15 15"><circle cx="6.5" cy="6.5" r="5.3" fill="#f3f3f3" stroke="#2a3f8a" stroke-width="2"/><path d="M3,6 L10,6 M6.5,2.5 L6.5,10" stroke="#c77" stroke-width="0.6"/><path d="M7.5,7.5 L12.5,12.5" stroke="#f0a020" stroke-width="2"/><path d="M12,12 L13.5,13.5" stroke="#e04040" stroke-width="2"/></svg>
<div class="a" style="left:72px;top:147px;width:1067px;height:23px;background:#ececec"></div>
<div class="a" style="left:72px;top:170px;width:23px;height:562px;background:#ececec"></div>
<div class="a" style="left:95px;top:170px;width:1044px;height:562px;background:#000"></div>
<div class="a" style="left:1139px;top:147px;width:14px;height:599px;background:#f9f9f9"></div>
<div class="a" style="left:1153px;top:147px;width:2px;height:599px;background:#dedede"></div>
<div class="a" style="left:1143px;top:317px;width:8px;height:268px;background:#7f7f7f;border-radius:4px"></div>
<div class="a" style="left:95px;top:732px;width:988px;height:14px;background:#f9f9f9"></div>
<div class="a" style="left:215px;top:736px;width:748px;height:8px;background:#7f7f7f;border-radius:4px"></div>
<div class="t" style="left:1102.6px;top:734.00px;font-size:13px;color:#111;">10 &lt; 100</div>
<div class="a" style="left:72px;top:746px;width:1083px;height:4px;background:linear-gradient(#ededed,#bcbcbc)"></div>
<div class="a" style="left:72px;top:750px;width:1081px;height:21px;background:#fff;border-bottom:1px solid #c6c6c6"></div>
<div class="a" style="left:1140px;top:750px;width:13px;height:20px;background:#f8f8f8"></div>
<div class="a" style="left:1142px;top:751px;width:8px;height:16px;background:#7f7f7f;border-radius:4px"></div>
<div class="t" style="left:76.8px;top:751.00px;font-size:13px;color:#1a1ae0;"><i>Command:</i> gf</div>
<div class="t" style="left:73px;top:779.00px;font-size:13px;color:#111;">Command:</div>
<div class="a" style="left:142px;top:776px;width:985px;height:18px;background:#fff"></div>
<div class="a" style="left:1127px;top:772px;width:26px;height:25px;border:1px solid #b8b8b8;background:linear-gradient(#e6e6e6,#f6f6f6)"></div>
<svg class="a" style="left:1132px;top:779px;" width="16" height="12" viewBox="0 0 16 12"><rect x="0.75" y="0.75" width="13.5" height="9.5" fill="#eee" stroke="#222" stroke-width="1"/><rect x="0.5" y="0.5" width="14" height="2.5" fill="#111"/><rect x="10" y="1.2" width="1.2" height="1" fill="#fff"/></svg>
<svg class="a" style="left:0px;top:0px;" width="1160" height="740" viewBox="0 0 1160 740"><defs><clipPath id="rc"><rect x="72" y="147" width="1067" height="585"/></clipPath></defs><g clip-path="url(#rc)"><path d="M104.5,163 L104.5,170" stroke="#666" stroke-width="1"/><text x="104.5" y="156" font-size="9.4" font-family="Liberation Sans" fill="#0a0a0a" text-anchor="middle">70</text><path d="M132.5,163 L132.5,170" stroke="#666" stroke-width="1"/><text x="132.5" y="156" font-size="9.4" font-family="Liberation Sans" fill="#0a0a0a" text-anchor="middle">80</text><path d="M161.5,163 L161.5,170" stroke="#666" stroke-width="1"/><text x="161.5" y="156" font-size="9.4" font-family="Liberation Sans" fill="#0a0a0a" text-anchor="middle">90</text><path d="M189.5,163 L189.5,170" stroke="#666" stroke-width="1"/><text x="189.5" y="156" font-size="9.4" font-family="Liberation Sans" fill="#0a0a0a" text-anchor="middle">100</text><path d="M218.5,163 L218.5,170" stroke="#666" stroke-width="1"/><text x="218.5" y="156" font-size="9.4" font-family="Liberation Sans" fill="#0a0a0a" text-anchor="middle">110</text><path d="M247.5,163 L247.5,170" stroke="#666" stroke-width="1"/><text x="247.5" y="156" font-size="9.4" font-family="Liberation Sans" fill="#0a0a0a" text-anchor="middle">120</text><path d="M275.5,163 L275.5,170" stroke="#666" stroke-width="1"/><text x="275.5" y="156" font-size="9.4" font-family="Liberation Sans" fill="#0a0a0a" text-anchor="middle">130</text><path d="M304.5,163 L304.5,170" stroke="#666" stroke-width="1"/><text x="304.5" y="156" font-size="9.4" font-family="Liberation Sans" fill="#0a0a0a" text-anchor="middle">140</text><path d="M332.5,163 L332.5,170" stroke="#666" stroke-width="1"/><text x="332.5" y="156" font-size="9.4" font-family="Liberation Sans" fill="#0a0a0a" text-anchor="middle">150</text><path d="M361.5,163 L361.5,170" stroke="#666" stroke-width="1"/><text x="361.5" y="156" font-size="9.4" font-family="Liberation Sans" fill="#0a0a0a" text-anchor="middle">160</text><path d="M390.5,163 L390.5,170" stroke="#666" stroke-width="1"/><text x="390.5" y="156" font-size="9.4" font-family="Liberation Sans" fill="#0a0a0a" text-anchor="middle">170</text><path d="M418.5,163 L418.5,170" stroke="#666" stroke-width="1"/><text x="418.5" y="156" font-size="9.4" font-family="Liberation Sans" fill="#0a0a0a" text-anchor="middle">180</text><path d="M447.5,163 L447.5,170" stroke="#666" stroke-width="1"/><text x="447.5" y="156" font-size="9.4" font-family="Liberation Sans" fill="#0a0a0a" text-anchor="middle">190</text><path d="M475.5,163 L475.5,170" stroke="#666" stroke-width="1"/><text x="475.5" y="156" font-size="9.4" font-family="Liberation Sans" fill="#0a0a0a" text-anchor="middle">200</text><path d="M504.5,163 L504.5,170" stroke="#666" stroke-width="1"/><text x="504.5" y="156" font-size="9.4" font-family="Liberation Sans" fill="#0a0a0a" text-anchor="middle">210</text><path d="M533.5,163 L533.5,170" stroke="#666" stroke-width="1"/><text x="533.5" y="156" font-size="9.4" font-family="Liberation Sans" fill="#0a0a0a" text-anchor="middle">220</text><path d="M561.5,163 L561.5,170" stroke="#666" stroke-width="1"/><text x="561.5" y="156" font-size="9.4" font-family="Liberation Sans" fill="#0a0a0a" text-anchor="middle">230</text><path d="M590.5,163 L590.5,170" stroke="#666" stroke-width="1"/><text x="590.5" y="156" font-size="9.4" font-family="Liberation Sans" fill="#0a0a0a" text-anchor="middle">240</text><path d="M618.5,163 L618.5,170" stroke="#666" stroke-width="1"/><text x="618.5" y="156" font-size="9.4" font-family="Liberation Sans" fill="#0a0a0a" text-anchor="middle">250</text><path d="M647.5,163 L647.5,170" stroke="#666" stroke-width="1"/><text x="647.5" y="156" font-size="9.4" font-family="Liberation Sans" fill="#0a0a0a" text-anchor="middle">260</text><path d="M676.5,163 L676.5,170" stroke="#666" stroke-width="1"/><text x="676.5" y="156" font-size="9.4" font-family="Liberation Sans" fill="#0a0a0a" text-anchor="middle">270</text><path d="M704.5,163 L704.5,170" stroke="#666" stroke-width="1"/><text x="704.5" y="156" font-size="9.4" font-family="Liberation Sans" fill="#0a0a0a" text-anchor="middle">280</text><path d="M733.5,163 L733.5,170" stroke="#666" stroke-width="1"/><text x="733.5" y="156" font-size="9.4" font-family="Liberation Sans" fill="#0a0a0a" text-anchor="middle">290</text><path d="M761.5,163 L761.5,170" stroke="#666" stroke-width="1"/><text x="761.5" y="156" font-size="9.4" font-family="Liberation Sans" fill="#0a0a0a" text-anchor="middle">300</text><path d="M790.5,163 L790.5,170" stroke="#666" stroke-width="1"/><text x="790.5" y="156" font-size="9.4" font-family="Liberation Sans" fill="#0a0a0a" text-anchor="middle">310</text><path d="M819.5,163 L819.5,170" stroke="#666" stroke-width="1"/><text x="819.5" y="156" font-size="9.4" font-family="Liberation Sans" fill="#0a0a0a" text-anchor="middle">320</text><path d="M847.5,163 L847.5,170" stroke="#666" stroke-width="1"/><text x="847.5" y="156" font-size="9.4" font-family="Liberation Sans" fill="#0a0a0a" text-anchor="middle">330</text><path d="M876.5,163 L876.5,170" stroke="#666" stroke-width="1"/><text x="876.5" y="156" font-size="9.4" font-family="Liberation Sans" fill="#0a0a0a" text-anchor="middle">340</text><path d="M904.5,163 L904.5,170" stroke="#666" stroke-width="1"/><text x="904.5" y="156" font-size="9.4" font-family="Liberation Sans" fill="#0a0a0a" text-anchor="middle">350</text><path d="M933.5,163 L933.5,170" stroke="#666" stroke-width="1"/><text x="933.5" y="156" font-size="9.4" font-family="Liberation Sans" fill="#0a0a0a" text-anchor="middle">360</text><path d="M962.5,163 L962.5,170" stroke="#666" stroke-width="1"/><text x="962.5" y="156" font-size="9.4" font-family="Liberation Sans" fill="#0a0a0a" text-anchor="middle">370</text><path d="M990.5,163 L990.5,170" stroke="#666" stroke-width="1"/><text x="990.5" y="156" font-size="9.4" font-family="Liberation Sans" fill="#0a0a0a" text-anchor="middle">380</text><path d="M1019.5,163 L1019.5,170" stroke="#666" stroke-width="1"/><text x="1019.5" y="156" font-size="9.4" font-family="Liberation Sans" fill="#0a0a0a" text-anchor="middle">390</text><path d="M1047.5,163 L1047.5,170" stroke="#666" stroke-width="1"/><text x="1047.5" y="156" font-size="9.4" font-family="Liberation Sans" fill="#0a0a0a" text-anchor="middle">400</text><path d="M1076.5,163 L1076.5,170" stroke="#666" stroke-width="1"/><text x="1076.5" y="156" font-size="9.4" font-family="Liberation Sans" fill="#0a0a0a" text-anchor="middle">410</text><path d="M1105.5,163 L1105.5,170" stroke="#666" stroke-width="1"/><text x="1105.5" y="156" font-size="9.4" font-family="Liberation Sans" fill="#0a0a0a" text-anchor="middle">420</text><path d="M1133.5,163 L1133.5,170" stroke="#666" stroke-width="1"/><text x="1133.5" y="156" font-size="9.4" font-family="Liberation Sans" fill="#0a0a0a" text-anchor="middle">430</text><path d="M88,727.5 L95,727.5" stroke="#666" stroke-width="1"/><text transform="translate(80.7,726.8) rotate(-90)" x="0" y="0" font-size="9.4" font-family="Liberation Sans" fill="#0a0a0a" text-anchor="middle">90</text><path d="M88,698.5 L95,698.5" stroke="#666" stroke-width="1"/><text transform="translate(80.7,697.8) rotate(-90)" x="0" y="0" font-size="9.4" font-family="Liberation Sans" fill="#0a0a0a" text-anchor="middle">100</text><path d="M88,670.5 L95,670.5" stroke="#666" stroke-width="1"/><text transform="translate(80.7,669.8) rotate(-90)" x="0" y="0" font-size="9.4" font-family="Liberation Sans" fill="#0a0a0a" text-anchor="middle">110</text><path d="M88,641.5 L95,641.5" stroke="#666" stroke-width="1"/><text transform="translate(80.7,640.8) rotate(-90)" x="0" y="0" font-size="9.4" font-family="Liberation Sans" fill="#0a0a0a" text-anchor="middle">120</text><path d="M88,613.5 L95,613.5" stroke="#666" stroke-width="1"/><text transform="translate(80.7,612.8) rotate(-90)" x="0" y="0" font-size="9.4" font-family="Liberation Sans" fill="#0a0a0a" text-anchor="middle">130</text><path d="M88,584.5 L95,584.5" stroke="#666" stroke-width="1"/><text transform="translate(80.7,583.8) rotate(-90)" x="0" y="0" font-size="9.4" font-family="Liberation Sans" fill="#0a0a0a" text-anchor="middle">140</text><path d="M88,555.5 L95,555.5" stroke="#666" stroke-width="1"/><text transform="translate(80.7,554.8) rotate(-90)" x="0" y="0" font-size="9.4" font-family="Liberation Sans" fill="#0a0a0a" text-anchor="middle">150</text><path d="M88,527.5 L95,527.5" stroke="#666" stroke-width="1"/><text transform="translate(80.7,526.8) rotate(-90)" x="0" y="0" font-size="9.4" font-family="Liberation Sans" fill="#0a0a0a" text-anchor="middle">160</text><path d="M88,498.5 L95,498.5" stroke="#666" stroke-width="1"/><text transform="translate(80.7,497.8) rotate(-90)" x="0" y="0" font-size="9.4" font-family="Liberation Sans" fill="#0a0a0a" text-anchor="middle">170</text><path d="M88,470.5 L95,470.5" stroke="#666" stroke-width="1"/><text transform="translate(80.7,469.8) rotate(-90)" x="0" y="0" font-size="9.4" font-family="Liberation Sans" fill="#0a0a0a" text-anchor="middle">180</text><path d="M88,441.5 L95,441.5" stroke="#666" stroke-width="1"/><text transform="translate(80.7,440.8) rotate(-90)" x="0" y="0" font-size="9.4" font-family="Liberation Sans" fill="#0a0a0a" text-anchor="middle">190</text><path d="M88,412.5 L95,412.5" stroke="#666" stroke-width="1"/><text transform="translate(80.7,411.8) rotate(-90)" x="0" y="0" font-size="9.4" font-family="Liberation Sans" fill="#0a0a0a" text-anchor="middle">200</text><path d="M88,384.5 L95,384.5" stroke="#666" stroke-width="1"/><text transform="translate(80.7,383.8) rotate(-90)" x="0" y="0" font-size="9.4" font-family="Liberation Sans" fill="#0a0a0a" text-anchor="middle">210</text><path d="M88,355.5 L95,355.5" stroke="#666" stroke-width="1"/><text transform="translate(80.7,354.8) rotate(-90)" x="0" y="0" font-size="9.4" font-family="Liberation Sans" fill="#0a0a0a" text-anchor="middle">220</text><path d="M88,327.5 L95,327.5" stroke="#666" stroke-width="1"/><text transform="translate(80.7,326.8) rotate(-90)" x="0" y="0" font-size="9.4" font-family="Liberation Sans" fill="#0a0a0a" text-anchor="middle">230</text><path d="M88,298.5 L95,298.5" stroke="#666" stroke-width="1"/><text transform="translate(80.7,297.8) rotate(-90)" x="0" y="0" font-size="9.4" font-family="Liberation Sans" fill="#0a0a0a" text-anchor="middle">240</text><path d="M88,269.5 L95,269.5" stroke="#666" stroke-width="1"/><text transform="translate(80.7,268.8) rotate(-90)" x="0" y="0" font-size="9.4" font-family="Liberation Sans" fill="#0a0a0a" text-anchor="middle">250</text><path d="M88,241.5 L95,241.5" stroke="#666" stroke-width="1"/><text transform="translate(80.7,240.8) rotate(-90)" x="0" y="0" font-size="9.4" font-family="Liberation Sans" fill="#0a0a0a" text-anchor="middle">260</text><path d="M88,212.5 L95,212.5" stroke="#666" stroke-width="1"/><text transform="translate(80.7,211.8) rotate(-90)" x="0" y="0" font-size="9.4" font-family="Liberation Sans" fill="#0a0a0a" text-anchor="middle">270</text><path d="M88,184.5 L95,184.5" stroke="#666" stroke-width="1"/><text transform="translate(80.7,183.8) rotate(-90)" x="0" y="0" font-size="9.4" font-family="Liberation Sans" fill="#0a0a0a" text-anchor="middle">280</text><path d="M1119.5,160 L1130.5,160 L1125,166 Z" fill="#111"/><path d="M85,402.5 L85,413.5 L91,408 Z" fill="#111"/></g></svg>
<svg class="a" style="left:0px;top:0px;" width="1160" height="740" viewBox="0 0 1160 740"><defs><clipPath id="cv"><rect x="95" y="170" width="1044" height="562"/></clipPath></defs><g clip-path="url(#cv)"><path d="M189.5,170 L189.5,732" stroke="#1e1e1e" stroke-width="1"/><path d="M475.5,170 L475.5,732" stroke="#1e1e1e" stroke-width="1"/><path d="M761.5,170 L761.5,732" stroke="#1e1e1e" stroke-width="1"/><path d="M1047.5,170 L1047.5,732" stroke="#1e1e1e" stroke-width="1"/><path d="M95,698.5 L1139,698.5 " stroke="#1e1e1e" stroke-width="1"/><path d="M95,412.5 L1139,412.5 " stroke="#1e1e1e" stroke-width="1"/><path d="M104,727h1v1h-1zM104,698h1v1h-1zM104,670h1v1h-1zM104,641h1v1h-1zM104,613h1v1h-1zM104,584h1v1h-1zM104,555h1v1h-1zM104,527h1v1h-1zM104,498h1v1h-1zM104,470h1v1h-1zM104,441h1v1h-1zM104,412h1v1h-1zM104,384h1v1h-1zM104,355h1v1h-1zM104,327h1v1h-1zM104,298h1v1h-1zM104,269h1v1h-1zM104,241h1v1h-1zM104,212h1v1h-1zM104,184h1v1h-1zM132,727h1v1h-1zM132,698h1v1h-1zM132,670h1v1h-1zM132,641h1v1h-1zM132,613h1v1h-1zM132,584h1v1h-1zM132,555h1v1h-1zM132,527h1v1h-1zM132,498h1v1h-1zM132,470h1v1h-1zM132,441h1v1h-1zM132,412h1v1h-1zM132,384h1v1h-1zM132,355h1v1h-1zM132,327h1v1h-1zM132,298h1v1h-1zM132,269h1v1h-1zM132,241h1v1h-1zM132,212h1v1h-1zM132,184h1v1h-1zM161,727h1v1h-1zM161,698h1v1h-1zM161,670h1v1h-1zM161,641h1v1h-1zM161,613h1v1h-1zM161,584h1v1h-1zM161,555h1v1h-1zM161,527h1v1h-1zM161,498h1v1h-1zM161,470h1v1h-1zM161,441h1v1h-1zM161,412h1v1h-1zM161,384h1v1h-1zM161,355h1v1h-1zM161,327h1v1h-1zM161,298h1v1h-1zM161,269h1v1h-1zM161,241h1v1h-1zM161,212h1v1h-1zM161,184h1v1h-1zM189,727h1v1h-1zM189,698h1v1h-1zM189,670h1v1h-1zM189,641h1v1h-1zM189,613h1v1h-1zM189,584h1v1h-1zM189,555h1v1h-1zM189,527h1v1h-1zM189,498h1v1h-1zM189,470h1v1h-1zM189,441h1v1h-1zM189,412h1v1h-1zM189,384h1v1h-1zM189,355h1v1h-1zM189,327h1v1h-1zM189,298h1v1h-1zM189,269h1v1h-1zM189,241h1v1h-1zM189,212h1v1h-1zM189,184h1v1h-1zM218,727h1v1h-1zM218,698h1v1h-1zM218,670h1v1h-1zM218,641h1v1h-1zM218,613h1v1h-1zM218,584h1v1h-1zM218,555h1v1h-1zM218,527h1v1h-1zM218,498h1v1h-1zM218,470h1v1h-1zM218,441h1v1h-1zM218,412h1v1h-1zM218,384h1v1h-1zM218,355h1v1h-1zM218,327h1v1h-1zM218,298h1v1h-1zM218,269h1v1h-1zM218,241h1v1h-1zM218,212h1v1h-1zM218,184h1v1h-1zM247,727h1v1h-1zM247,698h1v1h-1zM247,670h1v1h-1zM247,641h1v1h-1zM247,613h1v1h-1zM247,584h1v1h-1zM247,555h1v1h-1zM247,527h1v1h-1zM247,498h1v1h-1zM247,470h1v1h-1zM247,441h1v1h-1zM247,412h1v1h-1zM247,384h1v1h-1zM247,355h1v1h-1zM247,327h1v1h-1zM247,298h1v1h-1zM247,269h1v1h-1zM247,241h1v1h-1zM247,212h1v1h-1zM247,184h1v1h-1zM275,727h1v1h-1zM275,698h1v1h-1zM275,670h1v1h-1zM275,641h1v1h-1zM275,613h1v1h-1zM275,584h1v1h-1zM275,555h1v1h-1zM275,527h1v1h-1zM275,498h1v1h-1zM275,470h1v1h-1zM275,441h1v1h-1zM275,412h1v1h-1zM275,384h1v1h-1zM275,355h1v1h-1zM275,327h1v1h-1zM275,298h1v1h-1zM275,269h1v1h-1zM275,241h1v1h-1zM275,212h1v1h-1zM275,184h1v1h-1zM304,727h1v1h-1zM304,698h1v1h-1zM304,670h1v1h-1zM304,641h1v1h-1zM304,613h1v1h-1zM304,584h1v1h-1zM304,555h1v1h-1zM304,527h1v1h-1zM304,498h1v1h-1zM304,470h1v1h-1zM304,441h1v1h-1zM304,412h1v1h-1zM304,384h1v1h-1zM304,355h1v1h-1zM304,327h1v1h-1zM304,298h1v1h-1zM304,269h1v1h-1zM304,241h1v1h-1zM304,212h1v1h-1zM304,184h1v1h-1zM332,727h1v1h-1zM332,698h1v1h-1zM332,670h1v1h-1zM332,641h1v1h-1zM332,613h1v1h-1zM332,584h1v1h-1zM332,555h1v1h-1zM332,527h1v1h-1zM332,498h1v1h-1zM332,470h1v1h-1zM332,441h1v1h-1zM332,412h1v1h-1zM332,384h1v1h-1zM332,355h1v1h-1zM332,327h1v1h-1zM332,298h1v1h-1zM332,269h1v1h-1zM332,241h1v1h-1zM332,212h1v1h-1zM332,184h1v1h-1zM361,727h1v1h-1zM361,698h1v1h-1zM361,670h1v1h-1zM361,641h1v1h-1zM361,613h1v1h-1zM361,584h1v1h-1zM361,555h1v1h-1zM361,527h1v1h-1zM361,498h1v1h-1zM361,470h1v1h-1zM361,441h1v1h-1zM361,412h1v1h-1zM361,384h1v1h-1zM361,355h1v1h-1zM361,327h1v1h-1zM361,298h1v1h-1zM361,269h1v1h-1zM361,241h1v1h-1zM361,212h1v1h-1zM361,184h1v1h-1zM390,727h1v1h-1zM390,698h1v1h-1zM390,670h1v1h-1zM390,641h1v1h-1zM390,613h1v1h-1zM390,584h1v1h-1zM390,555h1v1h-1zM390,527h1v1h-1zM390,498h1v1h-1zM390,470h1v1h-1zM390,441h1v1h-1zM390,412h1v1h-1zM390,384h1v1h-1zM390,355h1v1h-1zM390,327h1v1h-1zM390,298h1v1h-1zM390,269h1v1h-1zM390,241h1v1h-1zM390,212h1v1h-1zM390,184h1v1h-1zM418,727h1v1h-1zM418,698h1v1h-1zM418,670h1v1h-1zM418,641h1v1h-1zM418,613h1v1h-1zM418,584h1v1h-1zM418,555h1v1h-1zM418,527h1v1h-1zM418,498h1v1h-1zM418,470h1v1h-1zM418,441h1v1h-1zM418,412h1v1h-1zM418,384h1v1h-1zM418,355h1v1h-1zM418,327h1v1h-1zM418,298h1v1h-1zM418,269h1v1h-1zM418,241h1v1h-1zM418,212h1v1h-1zM418,184h1v1h-1zM447,727h1v1h-1zM447,698h1v1h-1zM447,670h1v1h-1zM447,641h1v1h-1zM447,613h1v1h-1zM447,584h1v1h-1zM447,555h1v1h-1zM447,527h1v1h-1zM447,498h1v1h-1zM447,470h1v1h-1zM447,441h1v1h-1zM447,412h1v1h-1zM447,384h1v1h-1zM447,355h1v1h-1zM447,327h1v1h-1zM447,298h1v1h-1zM447,269h1v1h-1zM447,241h1v1h-1zM447,212h1v1h-1zM447,184h1v1h-1zM475,727h1v1h-1zM475,698h1v1h-1zM475,670h1v1h-1zM475,641h1v1h-1zM475,613h1v1h-1zM475,584h1v1h-1zM475,555h1v1h-1zM475,527h1v1h-1zM475,498h1v1h-1zM475,470h1v1h-1zM475,441h1v1h-1zM475,412h1v1h-1zM475,384h1v1h-1zM475,355h1v1h-1zM475,327h1v1h-1zM475,298h1v1h-1zM475,269h1v1h-1zM475,241h1v1h-1zM475,212h1v1h-1zM475,184h1v1h-1zM504,727h1v1h-1zM504,698h1v1h-1zM504,670h1v1h-1zM504,641h1v1h-1zM504,613h1v1h-1zM504,584h1v1h-1zM504,555h1v1h-1zM504,527h1v1h-1zM504,498h1v1h-1zM504,470h1v1h-1zM504,441h1v1h-1zM504,412h1v1h-1zM504,384h1v1h-1zM504,355h1v1h-1zM504,327h1v1h-1zM504,298h1v1h-1zM504,269h1v1h-1zM504,241h1v1h-1zM504,212h1v1h-1zM504,184h1v1h-1zM533,727h1v1h-1zM533,698h1v1h-1zM533,670h1v1h-1zM533,641h1v1h-1zM533,613h1v1h-1zM533,584h1v1h-1zM533,555h1v1h-1zM533,527h1v1h-1zM533,498h1v1h-1zM533,470h1v1h-1zM533,441h1v1h-1zM533,412h1v1h-1zM533,384h1v1h-1zM533,355h1v1h-1zM533,327h1v1h-1zM533,298h1v1h-1zM533,269h1v1h-1zM533,241h1v1h-1zM533,212h1v1h-1zM533,184h1v1h-1zM561,727h1v1h-1zM561,698h1v1h-1zM561,670h1v1h-1zM561,641h1v1h-1zM561,613h1v1h-1zM561,584h1v1h-1zM561,555h1v1h-1zM561,527h1v1h-1zM561,498h1v1h-1zM561,470h1v1h-1zM561,441h1v1h-1zM561,412h1v1h-1zM561,384h1v1h-1zM561,355h1v1h-1zM561,327h1v1h-1zM561,298h1v1h-1zM561,269h1v1h-1zM561,241h1v1h-1zM561,212h1v1h-1zM561,184h1v1h-1zM590,727h1v1h-1zM590,698h1v1h-1zM590,670h1v1h-1zM590,641h1v1h-1zM590,613h1v1h-1zM590,584h1v1h-1zM590,555h1v1h-1zM590,527h1v1h-1zM590,498h1v1h-1zM590,470h1v1h-1zM590,441h1v1h-1zM590,412h1v1h-1zM590,384h1v1h-1zM590,355h1v1h-1zM590,327h1v1h-1zM590,298h1v1h-1zM590,269h1v1h-1zM590,241h1v1h-1zM590,212h1v1h-1zM590,184h1v1h-1zM618,727h1v1h-1zM618,698h1v1h-1zM618,670h1v1h-1zM618,641h1v1h-1zM618,613h1v1h-1zM618,584h1v1h-1zM618,555h1v1h-1zM618,527h1v1h-1zM618,498h1v1h-1zM618,470h1v1h-1zM618,441h1v1h-1zM618,412h1v1h-1zM618,384h1v1h-1zM618,355h1v1h-1zM618,327h1v1h-1zM618,298h1v1h-1zM618,269h1v1h-1zM618,241h1v1h-1zM618,212h1v1h-1zM618,184h1v1h-1zM647,727h1v1h-1zM647,698h1v1h-1zM647,670h1v1h-1zM647,641h1v1h-1zM647,613h1v1h-1zM647,584h1v1h-1zM647,555h1v1h-1zM647,527h1v1h-1zM647,498h1v1h-1zM647,470h1v1h-1zM647,441h1v1h-1zM647,412h1v1h-1zM647,384h1v1h-1zM647,355h1v1h-1zM647,327h1v1h-1zM647,298h1v1h-1zM647,269h1v1h-1zM647,241h1v1h-1zM647,212h1v1h-1zM647,184h1v1h-1zM676,727h1v1h-1zM676,698h1v1h-1zM676,670h1v1h-1zM676,641h1v1h-1zM676,613h1v1h-1zM676,584h1v1h-1zM676,555h1v1h-1zM676,527h1v1h-1zM676,498h1v1h-1zM676,470h1v1h-1zM676,441h1v1h-1zM676,412h1v1h-1zM676,384h1v1h-1zM676,355h1v1h-1zM676,327h1v1h-1zM676,298h1v1h-1zM676,269h1v1h-1zM676,241h1v1h-1zM676,212h1v1h-1zM676,184h1v1h-1zM704,727h1v1h-1zM704,698h1v1h-1zM704,670h1v1h-1zM704,641h1v1h-1zM704,613h1v1h-1zM704,584h1v1h-1zM704,555h1v1h-1zM704,527h1v1h-1zM704,498h1v1h-1zM704,470h1v1h-1zM704,441h1v1h-1zM704,412h1v1h-1zM704,384h1v1h-1zM704,355h1v1h-1zM704,327h1v1h-1zM704,298h1v1h-1zM704,269h1v1h-1zM704,241h1v1h-1zM704,212h1v1h-1zM704,184h1v1h-1zM733,727h1v1h-1zM733,698h1v1h-1zM733,670h1v1h-1zM733,641h1v1h-1zM733,613h1v1h-1zM733,584h1v1h-1zM733,555h1v1h-1zM733,527h1v1h-1zM733,498h1v1h-1zM733,470h1v1h-1zM733,441h1v1h-1zM733,412h1v1h-1zM733,384h1v1h-1zM733,355h1v1h-1zM733,327h1v1h-1zM733,298h1v1h-1zM733,269h1v1h-1zM733,241h1v1h-1zM733,212h1v1h-1zM733,184h1v1h-1zM761,727h1v1h-1zM761,698h1v1h-1zM761,670h1v1h-1zM761,641h1v1h-1zM761,613h1v1h-1zM761,584h1v1h-1zM761,555h1v1h-1zM761,527h1v1h-1zM761,498h1v1h-1zM761,470h1v1h-1zM761,441h1v1h-1zM761,412h1v1h-1zM761,384h1v1h-1zM761,355h1v1h-1zM761,327h1v1h-1zM761,298h1v1h-1zM761,269h1v1h-1zM761,241h1v1h-1zM761,212h1v1h-1zM761,184h1v1h-1zM790,727h1v1h-1zM790,698h1v1h-1zM790,670h1v1h-1zM790,641h1v1h-1zM790,613h1v1h-1zM790,584h1v1h-1zM790,555h1v1h-1zM790,527h1v1h-1zM790,498h1v1h-1zM790,470h1v1h-1zM790,441h1v1h-1zM790,412h1v1h-1zM790,384h1v1h-1zM790,355h1v1h-1zM790,327h1v1h-1zM790,298h1v1h-1zM790,269h1v1h-1zM790,241h1v1h-1zM790,212h1v1h-1zM790,184h1v1h-1zM819,727h1v1h-1zM819,698h1v1h-1zM819,670h1v1h-1zM819,641h1v1h-1zM819,613h1v1h-1zM819,584h1v1h-1zM819,555h1v1h-1zM819,527h1v1h-1zM819,498h1v1h-1zM819,470h1v1h-1zM819,441h1v1h-1zM819,412h1v1h-1zM819,384h1v1h-1zM819,355h1v1h-1zM819,327h1v1h-1zM819,298h1v1h-1zM819,269h1v1h-1zM819,241h1v1h-1zM819,212h1v1h-1zM819,184h1v1h-1zM847,727h1v1h-1zM847,698h1v1h-1zM847,670h1v1h-1zM847,641h1v1h-1zM847,613h1v1h-1zM847,584h1v1h-1zM847,555h1v1h-1zM847,527h1v1h-1zM847,498h1v1h-1zM847,470h1v1h-1zM847,441h1v1h-1zM847,412h1v1h-1zM847,384h1v1h-1zM847,355h1v1h-1zM847,327h1v1h-1zM847,298h1v1h-1zM847,269h1v1h-1zM847,241h1v1h-1zM847,212h1v1h-1zM847,184h1v1h-1zM876,727h1v1h-1zM876,698h1v1h-1zM876,670h1v1h-1zM876,641h1v1h-1zM876,613h1v1h-1zM876,584h1v1h-1zM876,555h1v1h-1zM876,527h1v1h-1zM876,498h1v1h-1zM876,470h1v1h-1zM876,441h1v1h-1zM876,412h1v1h-1zM876,384h1v1h-1zM876,355h1v1h-1zM876,327h1v1h-1zM876,298h1v1h-1zM876,269h1v1h-1zM876,241h1v1h-1zM876,212h1v1h-1zM876,184h1v1h-1zM904,727h1v1h-1zM904,698h1v1h-1zM904,670h1v1h-1zM904,641h1v1h-1zM904,613h1v1h-1zM904,584h1v1h-1zM904,555h1v1h-1zM904,527h1v1h-1zM904,498h1v1h-1zM904,470h1v1h-1zM904,441h1v1h-1zM904,412h1v1h-1zM904,384h1v1h-1zM904,355h1v1h-1zM904,327h1v1h-1zM904,298h1v1h-1zM904,269h1v1h-1zM904,241h1v1h-1zM904,212h1v1h-1zM904,184h1v1h-1zM933,727h1v1h-1zM933,698h1v1h-1zM933,670h1v1h-1zM933,641h1v1h-1zM933,613h1v1h-1zM933,584h1v1h-1zM933,555h1v1h-1zM933,527h1v1h-1zM933,498h1v1h-1zM933,470h1v1h-1zM933,441h1v1h-1zM933,412h1v1h-1zM933,384h1v1h-1zM933,355h1v1h-1zM933,327h1v1h-1zM933,298h1v1h-1zM933,269h1v1h-1zM933,241h1v1h-1zM933,212h1v1h-1zM933,184h1v1h-1zM962,727h1v1h-1zM962,698h1v1h-1zM962,670h1v1h-1zM962,641h1v1h-1zM962,613h1v1h-1zM962,584h1v1h-1zM962,555h1v1h-1zM962,527h1v1h-1zM962,498h1v1h-1zM962,470h1v1h-1zM962,441h1v1h-1zM962,412h1v1h-1zM962,384h1v1h-1zM962,355h1v1h-1zM962,327h1v1h-1zM962,298h1v1h-1zM962,269h1v1h-1zM962,241h1v1h-1zM962,212h1v1h-1zM962,184h1v1h-1zM990,727h1v1h-1zM990,698h1v1h-1zM990,670h1v1h-1zM990,641h1v1h-1zM990,613h1v1h-1zM990,584h1v1h-1zM990,555h1v1h-1zM990,527h1v1h-1zM990,498h1v1h-1zM990,470h1v1h-1zM990,441h1v1h-1zM990,412h1v1h-1zM990,384h1v1h-1zM990,355h1v1h-1zM990,327h1v1h-1zM990,298h1v1h-1zM990,269h1v1h-1zM990,241h1v1h-1zM990,212h1v1h-1zM990,184h1v1h-1zM1019,727h1v1h-1zM1019,698h1v1h-1zM1019,670h1v1h-1zM1019,641h1v1h-1zM1019,613h1v1h-1zM1019,584h1v1h-1zM1019,555h1v1h-1zM1019,527h1v1h-1zM1019,498h1v1h-1zM1019,470h1v1h-1zM1019,441h1v1h-1zM1019,412h1v1h-1zM1019,384h1v1h-1zM1019,355h1v1h-1zM1019,327h1v1h-1zM1019,298h1v1h-1zM1019,269h1v1h-1zM1019,241h1v1h-1zM1019,212h1v1h-1zM1019,184h1v1h-1zM1047,727h1v1h-1zM1047,698h1v1h-1zM1047,670h1v1h-1zM1047,641h1v1h-1zM1047,613h1v1h-1zM1047,584h1v1h-1zM1047,555h1v1h-1zM1047,527h1v1h-1zM1047,498h1v1h-1zM1047,470h1v1h-1zM1047,441h1v1h-1zM1047,412h1v1h-1zM1047,384h1v1h-1zM1047,355h1v1h-1zM1047,327h1v1h-1zM1047,298h1v1h-1zM1047,269h1v1h-1zM1047,241h1v1h-1zM1047,212h1v1h-1zM1047,184h1v1h-1zM1076,727h1v1h-1zM1076,698h1v1h-1zM1076,670h1v1h-1zM1076,641h1v1h-1zM1076,613h1v1h-1zM1076,584h1v1h-1zM1076,555h1v1h-1zM1076,527h1v1h-1zM1076,498h1v1h-1zM1076,470h1v1h-1zM1076,441h1v1h-1zM1076,412h1v1h-1zM1076,384h1v1h-1zM1076,355h1v1h-1zM1076,327h1v1h-1zM1076,298h1v1h-1zM1076,269h1v1h-1zM1076,241h1v1h-1zM1076,212h1v1h-1zM1076,184h1v1h-1zM1105,727h1v1h-1zM1105,698h1v1h-1zM1105,670h1v1h-1zM1105,641h1v1h-1zM1105,613h1v1h-1zM1105,584h1v1h-1zM1105,555h1v1h-1zM1105,527h1v1h-1zM1105,498h1v1h-1zM1105,470h1v1h-1zM1105,441h1v1h-1zM1105,412h1v1h-1zM1105,384h1v1h-1zM1105,355h1v1h-1zM1105,327h1v1h-1zM1105,298h1v1h-1zM1105,269h1v1h-1zM1105,241h1v1h-1zM1105,212h1v1h-1zM1105,184h1v1h-1zM1133,727h1v1h-1zM1133,698h1v1h-1zM1133,670h1v1h-1zM1133,641h1v1h-1zM1133,613h1v1h-1zM1133,584h1v1h-1zM1133,555h1v1h-1zM1133,527h1v1h-1zM1133,498h1v1h-1zM1133,470h1v1h-1zM1133,441h1v1h-1zM1133,412h1v1h-1zM1133,384h1v1h-1zM1133,355h1v1h-1zM1133,327h1v1h-1zM1133,298h1v1h-1zM1133,269h1v1h-1zM1133,241h1v1h-1zM1133,212h1v1h-1zM1133,184h1v1h-1z" fill="#4a4a4a"/></g></svg>
<div class="a" style="left:1155px;top:122px;width:300px;height:675px;background:#ececec;border-top:1px solid #c8c8c8"></div>
<svg class="a" style="left:1150px;top:120px;" width="50" height="20" viewBox="1150 120 50 20"><circle cx="1164" cy="133" r="6.8" fill="#6b6b6b"/><path d="M1161,130 L1167,136 M1167,130 L1161,136" stroke="#fff" stroke-width="1.9"/><circle cx="1181.8" cy="133" r="6.8" fill="#6b6b6b"/><rect x="1177.8" y="132.5" width="5" height="3.8" fill="none" stroke="#fff" stroke-width="1.1"/><path d="M1179.8,132.5 L1179.8,130.3 L1185,130.3 L1185,134.2 L1182.8,134.2" fill="none" stroke="#fff" stroke-width="1.1"/></svg>
<div class="t" style="left:1297px;top:128.77px;font-size:11.5px;color:#222;">Layer List</div>
<div class="a" style="left:1155.5px;top:146px;width:60px;height:25px;border:1px solid #a9a9a9;border-top-color:#d8d8d8;background:linear-gradient(#e6e6e6,#f4f4f4 60%,#f2f2f2)"></div>
<div class="a" style="left:1215.5px;top:146px;width:60px;height:25px;border:1px solid #a9a9a9;border-top-color:#d8d8d8;background:linear-gradient(#e6e6e6,#f4f4f4 60%,#f2f2f2)"></div>
<div class="a" style="left:1275.5px;top:146px;width:60px;height:25px;border:1px solid #a9a9a9;border-top-color:#d8d8d8;background:linear-gradient(#e6e6e6,#f4f4f4 60%,#f2f2f2)"></div>
<div class="a" style="left:1335.5px;top:146px;width:60px;height:25px;border:1px solid #a9a9a9;border-top-color:#d8d8d8;background:linear-gradient(#e6e6e6,#f4f4f4 60%,#f2f2f2)"></div>
<div class="a" style="left:1395.5px;top:146px;width:60px;height:25px;border:1px solid #a9a9a9;border-top-color:#d8d8d8;background:linear-gradient(#e6e6e6,#f4f4f4 60%,#f2f2f2)"></div>
<svg class="a" style="left:1150px;top:140px;" width="310" height="40" viewBox="1150 140 310 40"><g transform="translate(1185,158)"><path d="M-7.6,0.6 Q-6,-5.8 0,-5.8 Q5.5,-5.8 7.6,0.8 Q5.5,5.8 0,5.8 Q-5.8,5.8 -7.6,0.6 Z" fill="#111"/><path d="M-4.4,-1.2 Q-4,3.6 0,3.6 Q4,3.6 4.4,-1.2" fill="none" stroke="#fff" stroke-width="1.5"/><path d="M-1,-2 L0,0" stroke="#888" stroke-width="0.6"/></g><g transform="translate(1245,158)"><path d="M-7.6,0.6 Q-6,-5.8 0,-5.8 Q5.5,-5.8 7.6,0.8 Q5.5,5.8 0,5.8 Q-5.8,5.8 -7.6,0.6 Z" fill="#b0b0b0"/><path d="M-4.4,-1.2 Q-4,3.6 0,3.6 Q4,3.6 4.4,-1.2" fill="none" stroke="#fff" stroke-width="1.5"/><path d="M-1,-2 L0,0" stroke="#888" stroke-width="0.6"/></g><path d="M1298,158 L1311,158 M1304.5,151.5 L1304.5,164.5" stroke="#e0141a" stroke-width="3.2"/><path d="M1358,158 L1371,158" stroke="#e0141a" stroke-width="3.2"/><g transform="translate(1417.5,150)"><path d="M1,14 L11,2.5 L13.5,4.5 L3.5,16 L0.5,16.5 Z" fill="#eba12a" stroke="#8a5a10" stroke-width="0.6"/><path d="M11,2.5 L12.5,0.8 L15,2.8 L13.5,4.5 Z" fill="#e02a2a"/></g></svg>
<div class="a" style="left:1155px;top:171px;width:300px;height:388px;background:#fff;border:1px solid #c8c8c8;border-top:none"></div>
<div class="a" style="left:1180.5px;top:177.5px;width:16px;height:9px;border:1.2px solid #111"></div>
<div class="t" style="left:1203px;top:176.50px;font-size:13px;color:#111;">0</div>
<svg class="a" style="left:1390px;top:172px;" width="65" height="20" viewBox="1390 0 65 20"><g transform="translate(1393.5,2.5)"><path d="M1,14 L11,2.5 L13.5,4.5 L3.5,16 L0.5,16.5 Z" fill="#eba12a" stroke="#8a5a10" stroke-width="0.6"/><path d="M11,2.5 L12.5,0.8 L15,2.8 L13.5,4.5 Z" fill="#e02a2a"/></g><g transform="translate(1423,10)"><path d="M-7.6,0.6 Q-6,-5.8 0,-5.8 Q5.5,-5.8 7.6,0.8 Q5.5,5.8 0,5.8 Q-5.8,5.8 -7.6,0.6 Z" fill="#111"/><path d="M-4.4,-1.2 Q-4,3.6 0,3.6 Q4,3.6 4.4,-1.2" fill="none" stroke="#fff" stroke-width="1.5"/><path d="M-1,-2 L0,0" stroke="#888" stroke-width="0.6"/></g><path d="M1441,10 L1441,7.5 Q1441,3 1445,3 Q1449,3 1449,7.5 L1449,10" fill="none" stroke="#c4c4c4" stroke-width="1.6"/><rect x="1439.5" y="9.5" width="11" height="8" fill="#c4c4c4"/></svg>
<svg class="a" style="left:1150px;top:555px;" width="50" height="25" viewBox="1150 555 50 25"><circle cx="1164" cy="569" r="6.8" fill="#6b6b6b"/><path d="M1161,566 L1167,572 M1167,566 L1161,572" stroke="#fff" stroke-width="1.9"/><circle cx="1181.8" cy="569" r="6.8" fill="#6b6b6b"/><rect x="1177.8" y="568.5" width="5" height="3.8" fill="none" stroke="#fff" stroke-width="1.1"/><path d="M1179.8,568.5 L1179.8,566.3 L1185,566.3 L1185,570.2 L1182.8,570.2" fill="none" stroke="#fff" stroke-width="1.1"/></svg>
<div class="t" style="left:1283.3px;top:564.27px;font-size:11.5px;color:#222;">Selection Filter</div>
<div class="a" style="left:1155px;top:579px;width:300px;height:2px;background:#d2d2d2"></div>
<div class="a" style="left:1167px;top:594.5px;width:275.5px;height:129.5px;background:#e5e5e5;border-top:1px solid #dadada"></div>
<div class="t" style="left:1173.6px;top:585.34px;font-size:12px;color:#111;background:#ececec;padding:0 1px">Filter</div>
<div class="t" style="left:1182px;top:618.66px;font-size:13.4px;color:#111;">Entity type:</div>
<div class="t" style="left:1182px;top:644.66px;font-size:13.4px;color:#111;">Property:</div>
<div class="t" style="left:1182px;top:670.66px;font-size:13.4px;color:#111;">Comparison:</div>
<div class="t" style="left:1182px;top:693.66px;font-size:13.4px;color:#111;">Value:</div>
<div class="a" style="left:1267px;top:615px;width:160.5px;height:20.5px;background:#fff;border:1px solid #d2d2d2;border-radius:5px;box-shadow:0 0.5px 1px rgba(0,0,0,0.1)"></div>
<div class="a" style="left:1409px;top:617px;width:16px;height:16.5px;background:#1f6ff0;border-radius:4px"></div>
<svg class="a" style="left:1412px;top:619px;" width="10" height="13" viewBox="0 0 10 13"><path d="M2,5 L5,2 L8,5 M2,8 L5,11 L8,8" fill="none" stroke="#fff" stroke-width="1.3"/></svg>
<div class="a" style="left:1267px;top:641px;width:160.5px;height:20.5px;background:#fff;border:1px solid #d2d2d2;border-radius:5px;box-shadow:0 0.5px 1px rgba(0,0,0,0.1)"></div>
<div class="a" style="left:1409px;top:643px;width:16px;height:16.5px;background:#1f6ff0;border-radius:4px"></div>
<svg class="a" style="left:1412px;top:645px;" width="10" height="13" viewBox="0 0 10 13"><path d="M2,5 L5,2 L8,5 M2,8 L5,11 L8,8" fill="none" stroke="#fff" stroke-width="1.3"/></svg>
<div class="a" style="left:1267px;top:667px;width:160.5px;height:20.5px;background:#fff;border:1px solid #d2d2d2;border-radius:5px;box-shadow:0 0.5px 1px rgba(0,0,0,0.1)"></div>
<div class="a" style="left:1409px;top:669px;width:16px;height:16.5px;background:#1f6ff0;border-radius:4px"></div>
<svg class="a" style="left:1412px;top:671px;" width="10" height="13" viewBox="0 0 10 13"><path d="M2,5 L5,2 L8,5 M2,8 L5,11 L8,8" fill="none" stroke="#fff" stroke-width="1.3"/></svg>
<div class="a" style="left:1167px;top:739px;width:69px;height:26px;border:1px solid #aaaaaa;background:linear-gradient(#e6e6e6,#f7f7f7 70%,#f1f1f1)"></div>
<div class="a" style="left:1236px;top:739px;width:69px;height:26px;border:1px solid #aaaaaa;background:linear-gradient(#e6e6e6,#f7f7f7 70%,#f1f1f1)"></div>
<div class="a" style="left:1305px;top:739px;width:69px;height:26px;border:1px solid #aaaaaa;background:linear-gradient(#e6e6e6,#f7f7f7 70%,#f1f1f1)"></div>
<div class="a" style="left:1374px;top:739px;width:68.5px;height:26px;border:1px solid #aaaaaa;background:linear-gradient(#e6e6e6,#f7f7f7 70%,#f1f1f1)"></div>
<svg class="a" style="left:1150px;top:730px;" width="310" height="40" viewBox="1150 730 310 40"><rect x="1194.5" y="745.5" width="13" height="12.5" fill="#f98c8c" stroke="#333" stroke-width="0.7" stroke-dasharray="1 1"/><rect x="1263" y="745" width="11" height="11" fill="#f98c8c" stroke="#444" stroke-width="0.7"/><rect x="1266" y="748" width="11" height="11" fill="#f98c8c" stroke="#333" stroke-width="0.7" stroke-dasharray="1 1"/><rect x="1332" y="745" width="11" height="11" fill="#f98c8c" stroke="#444" stroke-width="0.7"/><rect x="1335" y="748" width="11" height="11" fill="none" stroke="#333" stroke-width="0.7" stroke-dasharray="1 1"/><rect x="1335" y="748" width="8" height="8" fill="#fff"/><rect x="1401" y="745" width="11" height="11" fill="#fff" stroke="#444" stroke-width="0.7"/><rect x="1404" y="748" width="11" height="11" fill="none" stroke="#333" stroke-width="0.7" stroke-dasharray="1 1"/><rect x="1404" y="748" width="8" height="8" fill="#f98c8c"/></svg>
<div class="a" style="left:1455px;top:122px;width:45px;height:676px;background:linear-gradient(90deg,#ededed,#e6e6e6 45%,#d4d4d4 80%,#c4c4c4);border-top:1px solid #c8c8c8;border-left:1px solid #f6f6f6"></div>
<div class="a" style="left:1463px;top:131px;width:2px;height:2px;background:#a8a8a8"></div>
<div class="a" style="left:1469px;top:131px;width:2px;height:2px;background:#a8a8a8"></div>
<div class="a" style="left:1475px;top:131px;width:2px;height:2px;background:#a8a8a8"></div>
<div class="a" style="left:1481px;top:131px;width:2px;height:2px;background:#a8a8a8"></div>
<div class="a" style="left:1487px;top:131px;width:2px;height:2px;background:#a8a8a8"></div>
<div class="a" style="left:1459.0px;top:276px;width:1.5px;height:1.5px;background:#8a8a8a"></div>
<div class="a" style="left:1463.3px;top:276px;width:1.5px;height:1.5px;background:#8a8a8a"></div>
<div class="a" style="left:1467.6px;top:276px;width:1.5px;height:1.5px;background:#8a8a8a"></div>
<div class="a" style="left:1471.9px;top:276px;width:1.5px;height:1.5px;background:#8a8a8a"></div>
<div class="a" style="left:1476.2px;top:276px;width:1.5px;height:1.5px;background:#8a8a8a"></div>
<div class="a" style="left:1480.5px;top:276px;width:1.5px;height:1.5px;background:#8a8a8a"></div>
<div class="a" style="left:1484.8px;top:276px;width:1.5px;height:1.5px;background:#8a8a8a"></div>
<div class="a" style="left:1489.1px;top:276px;width:1.5px;height:1.5px;background:#8a8a8a"></div>
<div class="a" style="left:1493.4px;top:276px;width:1.5px;height:1.5px;background:#8a8a8a"></div>
<div class="a" style="left:1459.0px;top:425px;width:1.5px;height:1.5px;background:#8a8a8a"></div>
<div class="a" style="left:1463.3px;top:425px;width:1.5px;height:1.5px;background:#8a8a8a"></div>
<div class="a" style="left:1467.6px;top:425px;width:1.5px;height:1.5px;background:#8a8a8a"></div>
<div class="a" style="left:1471.9px;top:425px;width:1.5px;height:1.5px;background:#8a8a8a"></div>
<div class="a" style="left:1476.2px;top:425px;width:1.5px;height:1.5px;background:#8a8a8a"></div>
<div class="a" style="left:1480.5px;top:425px;width:1.5px;height:1.5px;background:#8a8a8a"></div>
<div class="a" style="left:1484.8px;top:425px;width:1.5px;height:1.5px;background:#8a8a8a"></div>
<div class="a" style="left:1489.1px;top:425px;width:1.5px;height:1.5px;background:#8a8a8a"></div>
<div class="a" style="left:1493.4px;top:425px;width:1.5px;height:1.5px;background:#8a8a8a"></div>
<div class="a" style="left:1459.0px;top:528px;width:1.5px;height:1.5px;background:#8a8a8a"></div>
<div class="a" style="left:1463.3px;top:528px;width:1.5px;height:1.5px;background:#8a8a8a"></div>
<div class="a" style="left:1467.6px;top:528px;width:1.5px;height:1.5px;background:#8a8a8a"></div>
<div class="a" style="left:1471.9px;top:528px;width:1.5px;height:1.5px;background:#8a8a8a"></div>
<div class="a" style="left:1476.2px;top:528px;width:1.5px;height:1.5px;background:#8a8a8a"></div>
<div class="a" style="left:1480.5px;top:528px;width:1.5px;height:1.5px;background:#8a8a8a"></div>
<div class="a" style="left:1484.8px;top:528px;width:1.5px;height:1.5px;background:#8a8a8a"></div>
<div class="a" style="left:1489.1px;top:528px;width:1.5px;height:1.5px;background:#8a8a8a"></div>
<div class="a" style="left:1493.4px;top:528px;width:1.5px;height:1.5px;background:#8a8a8a"></div>
<div class="a" style="left:1457px;top:135.5px;width:41px;height:41.5px;background:#b5b5b5;border-radius:6px"></div>
<div class="a" style="left:1457px;top:330px;width:41px;height:43px;background:#b5b5b5;border-radius:6px"></div>
<div class="a" style="left:1457px;top:433px;width:41px;height:42.5px;background:#b5b5b5;border-radius:6px"></div>
<svg class="a" style="left:1455px;top:120px;" width="45" height="460" viewBox="1455 120 45 460"><g transform="translate(1463,142)"><rect x="0.5" y="0.5" width="27" height="27" fill="#fff" stroke="#222" stroke-width="1"/><rect x="0" y="0" width="28" height="4.5" fill="#000"/><rect x="1.5" y="1" width="3" height="2.5" fill="#fff"/><path d="M7,12 L14,9 L14,22 L7,24 Z" fill="#888" stroke="#333" stroke-width="0.6"/><path d="M10,11 L19,8 L19,21 L10,23 Z" fill="#ddd" stroke="#333" stroke-width="0.6"/><path d="M13,10 L22,7 L22,20 L13,22 Z" fill="#fff" stroke="#333" stroke-width="0.6"/><path d="M15,19 L19,11 L20,19 Z" fill="none" stroke="#e22" stroke-width="0.8"/></g><g transform="translate(1463,189)"><rect x="0.5" y="0.5" width="27" height="27" fill="#fff" stroke="#222" stroke-width="1"/><rect x="0" y="0" width="28" height="4.5" fill="#000"/><rect x="1.5" y="1" width="3" height="2.5" fill="#fff"/><rect x="6" y="9" width="11" height="9" fill="#efe7c0" stroke="#555" stroke-width="0.7"/><circle cx="16" cy="18" r="5" fill="#efe7c0" stroke="#555" stroke-width="0.7"/></g><g transform="translate(1463,235)"><rect x="0.5" y="0.5" width="27" height="27" fill="#fff" stroke="#222" stroke-width="1"/><rect x="0" y="0" width="28" height="4.5" fill="#000"/><rect x="1.5" y="1" width="3" height="2.5" fill="#fff"/><rect x="6" y="10" width="16" height="11" rx="2" fill="#f4f4f4" stroke="#b8c8e8" stroke-width="0.8"/></g><g transform="translate(1463,291)"><rect x="0.5" y="0.5" width="27" height="27" fill="#fff" stroke="#222" stroke-width="1"/><rect x="0" y="0" width="28" height="4.5" fill="#000"/><rect x="1.5" y="1" width="3" height="2.5" fill="#fff"/><rect x="4" y="9" width="4" height="3" fill="#111"/><rect x="4" y="15" width="4" height="3" fill="#111"/><rect x="4" y="21" width="4" height="3" fill="#111"/><rect x="10.5" y="9" width="14" height="3.5" fill="none" stroke="#333" stroke-width="0.7"/><rect x="10.5" y="15" width="14" height="3.5" fill="none" stroke="#333" stroke-width="0.7"/><rect x="10.5" y="21" width="14" height="3.5" fill="none" stroke="#333" stroke-width="0.7"/></g><g transform="translate(1463,337)"><rect x="0.5" y="0.5" width="27" height="27" fill="#fff" stroke="#222" stroke-width="1"/><rect x="0" y="0" width="28" height="4.5" fill="#000"/><rect x="1.5" y="1" width="3" height="2.5" fill="#fff"/><path d="M6.5,10 L21.5,10 L16,16 L16,25 L12.5,22 L12.5,16 Z" fill="#999" stroke="#555" stroke-width="0.6"/><ellipse cx="14" cy="10.5" rx="7.5" ry="1.5" fill="#bbb"/></g><g transform="translate(1463,384)"><rect x="0.5" y="0.5" width="27" height="27" fill="#fff" stroke="#222" stroke-width="1"/><rect x="0" y="0" width="28" height="4.5" fill="#000"/><rect x="1.5" y="1" width="3" height="2.5" fill="#fff"/><path d="M6,9 L11,12 L11,20 L6,23 Z" fill="#eee" stroke="#444" stroke-width="0.7"/><rect x="11" y="13" width="11" height="6" rx="1.5" fill="#888" stroke="#444" stroke-width="0.6"/><path d="M4,16 L25,16" stroke="#e88" stroke-width="0.7" stroke-dasharray="1.5 1"/></g><g transform="translate(1463,440)"><rect x="0.5" y="0.5" width="27" height="27" fill="#fff" stroke="#222" stroke-width="1"/><rect x="0" y="0" width="28" height="4.5" fill="#000"/><rect x="1.5" y="1" width="3" height="2.5" fill="#fff"/><path d="M3,9 L13,9 M3,12 L13,12 M3,15 L15,15 M3,18 L16,18" stroke="#777" stroke-width="0.8"/><path d="M0,22 L28,22" stroke="#222" stroke-width="0.8"/><path d="M3,25 L6,25 M11,25 L24,25" stroke="#555" stroke-width="0.8"/></g><g transform="translate(1463,487)"><rect x="0.5" y="0.5" width="27" height="27" fill="#fff" stroke="#222" stroke-width="1"/><rect x="0" y="0" width="28" height="4.5" fill="#000"/><rect x="1.5" y="1" width="3" height="2.5" fill="#fff"/><rect x="8" y="8" width="13" height="16" rx="1" fill="#c98a2a"/><rect x="9.5" y="10" width="10" height="12.5" fill="#f4f4f4"/><rect x="11" y="7" width="7" height="3" rx="1" fill="#999"/><path d="M11,13 L18,13 M11,15.5 L18,15.5 M11,18 L16,18" stroke="#aaa" stroke-width="0.6"/></g><path d="M1465.5,550 L1474.5,550 L1469.5,556 Q1475,556 1475,561 Q1475,566 1469.5,566 L1465,566 M1479.5,549.5 L1479.5,566 L1484,566 Q1491,566 1491,557.75 Q1491,549.5 1484,549.5 Z" fill="none" stroke="#1a1a1a" stroke-width="1.6"/></svg>
<div class="a" style="left:0px;top:798px;width:1500px;height:46px;background:#dcdcdc;border-top:1px solid #c8c8c8"></div>
<div class="t" style="left:2.5px;top:807.95px;font-size:10.1px;color:#1a1a1a;">427.0269,201.7333</div>
<div class="t" style="left:2.5px;top:828.45px;font-size:10.1px;color:#1a1a1a;">@427.0269,201.7333</div>
<div class="a" style="left:253px;top:802px;width:1px;height:40px;background:#8a8a8a"></div>
<div class="t" style="left:256.5px;top:807.95px;font-size:10.1px;color:#1a1a1a;">472.2799&lt;25°</div>
<div class="t" style="left:256.5px;top:828.45px;font-size:10.1px;color:#1a1a1a;">@472.2799&lt;25°</div>
<div class="a" style="left:506px;top:819px;width:6px;height:6px;background:#c2c2c2;border-radius:3px"></div>
<div class="a" style="left:940px;top:819px;width:6px;height:6px;background:#c2c2c2;border-radius:3px"></div>
<div class="a" style="left:1269px;top:819px;width:6px;height:6px;background:#c2c2c2;border-radius:3px"></div>
<svg class="a" style="left:716px;top:805px;" width="20" height="33" viewBox="0 0 20 33"><rect x="1" y="1" width="17" height="30" rx="8.5" fill="#fff" stroke="#333" stroke-width="1"/><path d="M1,15 L18,15 M9.5,1 L9.5,15" stroke="#333" stroke-width="1"/><rect x="7.5" y="4" width="4" height="8" rx="2" fill="#fff" stroke="#333" stroke-width="1"/></svg>
<div class="t" style="left:949px;top:818.28px;font-size:10.3px;color:#111;letter-spacing:0.1px">No entities selected.</div>
<svg class="a" style="left:0px;top:0px;" width="1160" height="740" viewBox="0 0 1160 740"><defs><clipPath id="dc"><rect x="95" y="170" width="1044" height="562"/></clipPath></defs><g clip-path="url(#dc)" fill="none" stroke-width="1" stroke-linejoin="round"><path d="M360.6,269.4 L358.3,286.4 M332.4,290.1 L342.8,291.0 L349.4,291.3 L350.9,285.4 L358.3,286.4 L369.4,288.4 M332.4,297.6 L338.3,298.3 L337.6,307.9 L332.4,307.2 M332.4,307.2 L388.7,313.9 L421.3,316.5 L416.9,330.1 L413.1,339.0 L410.2,350.9 L405.7,364.2 L402.0,373.1 L397.6,387.0 M346.5,299.8 L345.7,309.1 M346.5,299.8 L433.1,308.7 L437.6,310.9 L440.6,316.1 M398.3,346.4 L410.2,350.9 M398.3,346.4 L384.3,387.0 M384.3,354.6 L407.2,358.0 M384.3,354.6 L380.6,385.0 M390.2,368.7 L402.8,372.8 M332.4,379.0 L380.6,385.0 M408.7,354.6 L416.9,361.0 M436.1,346.4 L449.4,341.3 L453.9,335.3 L462.0,336.8 M462.0,337.6 L468.0,338.3 L465.0,355.3 L460.6,354.6 L462.0,337.6 M462.0,340.5 L467.2,341.3 M461.6,343.2 L466.8,343.9 M461.1,345.9 L466.3,346.6 M460.7,348.5 L465.9,349.3 M460.3,351.2 L465.4,351.9 M471.7,318.3 L470.9,334.6 L525.0,340.5 M467.2,334.6 L467.2,337.6 L525.0,343.5 M485.0,279.8 L496.9,280.5 L491.7,315.3 M483.5,288.7 L494.6,289.9 M481.3,305.7 L492.4,306.4 M496.9,269.7 L502.8,270.1 M510.2,269.4 L511.7,273.1 L525.0,275.3 M510.2,279.8 L525.0,281.3 M510.2,279.8 L507.2,301.3 L525.0,303.5 M505.0,306.4 L525.0,308.7 M505.0,306.4 L502.8,319.0 M448.0,353.9 L485.7,358.3 L482.0,387.0 M448.0,353.9 L445.0,364.2 L443.5,364.2 L442.0,379.0 L432.4,377.6 L431.7,387.0 M432.4,377.6 L502.8,387.0 M517.6,361.3 L525.0,362.0 M517.6,361.3 L515.4,372.4 L513.9,372.4 L512.4,387.0 M515.0,274.6 L592.0,283.5 L599.4,276.8 L600.2,269.7 M515.0,280.5 L591.3,289.4 L599.4,297.6 L599.1,301.3 L603.9,301.7 L603.1,310.1 M601.7,310.1 L619.4,311.6 L618.0,326.9 L601.4,325.0 L601.7,310.1 M612.0,302.7 L611.3,310.1 M607.6,269.7 L607.6,273.9 L616.5,274.6 L615.7,285.0 L623.9,285.7 L622.9,296.8 L639.4,297.6 L649.8,293.9 L669.1,279.5 L661.7,269.4 M612.0,302.7 L639.4,305.7 L653.5,301.3 L673.5,285.7 L706.1,326.9 L711.7,323.5 L683.1,288.4 L706.1,270.1 M669.8,270.1 L672.0,272.4 L674.3,271.2 L681.7,279.8 L694.3,270.1 M515.0,302.0 L565.4,308.7 L567.6,310.9 L597.2,313.1 L597.2,319.0 L567.6,314.6 L565.4,313.1 L515.0,307.9 M515.0,342.7 L558.7,347.6 L557.2,354.6 L581.7,356.8 L584.6,332.8 L535.7,327.2 L534.3,341.3 M515.0,339.0 L651.3,355.3 L647.6,387.0 M518.0,361.3 L555.0,366.4 L552.0,387.0 M518.0,361.3 L515.0,372.4 M586.9,369.4 L624.6,374.6 L622.4,387.0 M586.9,369.4 L584.6,380.5 L583.1,387.0 M676.5,365.0 L715.0,369.4 M676.5,365.0 L674.3,387.0 M741.3,269.4 L755.4,284.2 L765.0,300.5 L769.4,315.3 L770.2,328.7 L768.7,350.9 L765.0,387.0 M748.0,269.4 L761.3,284.2 L770.2,300.5 L774.6,318.3 L775.4,339.0 L777.6,336.1 M777.6,336.1 L814.6,339.3 L816.9,333.9 L829.4,334.6 L834.6,334.6 L834.6,339.8 M817.6,293.1 L833.9,294.6 L829.4,334.6 M817.6,293.1 L816.1,309.4 L819.1,310.1 L816.9,333.9 M890.9,270.1 L897.6,272.4 L896.9,276.8 L898.3,287.9 M868.7,279.8 L894.6,282.7 M868.7,279.8 L867.2,286.4 M856.9,285.7 L881.3,287.9 L879.1,313.1 L854.6,311.6 L856.9,285.7 M881.3,285.0 L894.6,286.4 M881.3,285.0 L879.1,313.1 M879.1,308.7 L885.0,309.4 L883.5,322.0 L869.4,320.5 L870.2,313.1 M863.5,313.1 L862.0,325.0 L876.1,326.4 L876.1,330.1 L880.6,333.1 L885.0,337.6 L888.7,344.2 M884.3,315.3 L891.7,312.4 M784.3,351.6 L800.6,353.1 L802.0,347.9 L810.2,349.4 L808.7,353.9 L838.3,353.9 L835.4,381.3 L782.0,376.8 L784.3,351.6 M853.1,358.3 L862.8,357.6 L879.1,359.8 L884.3,359.8 L888.7,355.3 M862.8,357.6 L862.0,367.2 L877.6,369.4 L879.1,359.8 M853.1,358.3 L849.4,387.0 M877.6,369.4 L875.4,387.0 M888.7,345.0 L888.0,387.0 M705.0,315.3 L711.7,322.7 L705.0,327.2 M705.0,368.7 L736.9,371.6 L735.4,387.0 M411.7,423.5 L525.0,436.1 M410.9,429.1 L525.0,441.0 M348.0,407.2 L392.4,411.6 M348.0,407.2 L348.7,413.9 L379.8,416.8 L376.9,442.7 L345.7,439.0 L348.7,413.9 M353.9,440.5 L353.1,447.2 L368.7,448.7 L368.7,442.0 M376.9,442.7 L376.1,450.9 L396.9,454.6 M384.3,382.0 L384.3,384.2 L395.4,388.7 M399.1,382.0 L394.6,389.4 L392.4,397.6 M424.3,392.4 L430.9,393.1 L431.7,382.0 M424.3,392.4 L422.0,416.1 L452.4,419.8 L452.4,421.3 L471.7,421.3 L473.1,393.9 L476.1,382.0 M446.5,421.3 L446.5,426.4 L470.2,429.4 L470.9,421.3 M476.1,389.4 L491.7,390.9 L489.4,399.0 L483.5,398.3 L480.6,430.9 M476.1,389.4 L473.1,430.9 M495.4,401.3 L492.4,424.2 L516.1,427.9 L515.4,433.9 M495.4,401.3 L501.3,400.5 L502.8,386.4 L525.0,389.4 M501.3,400.5 L499.8,426.4 M476.9,384.2 L525.0,387.6 M405.0,462.7 L421.3,463.5 L421.3,466.4 L486.5,470.1 L488.7,484.2 M442.0,467.9 L440.6,493.1 L405.0,491.6 M332.4,499.8 L369.4,507.0 M405.0,496.1 L410.9,502.0 L419.8,506.4 M443.5,507.0 L458.3,499.0 L525.0,481.3 M425.7,507.0 L428.0,503.5 L441.3,503.5 L443.5,506.4 M515.0,440.5 L614.3,447.2 M515.0,433.1 L539.4,436.8 M515.0,484.2 L578.7,469.4 L715.0,436.8 M564.6,487.2 L715.0,505.0 M515.0,387.9 L546.1,392.4 L616.5,400.5 L629.8,401.3 M552.0,382.0 L551.3,392.4 M583.9,382.0 L582.4,395.3 M623.9,382.0 L621.7,400.5 M546.1,392.4 L545.4,396.1 L560.9,397.6 L559.4,407.2 L553.5,406.4 L550.6,439.8 M545.4,396.1 L540.2,437.6 L515.0,434.6 M515.0,429.4 L522.4,428.7 L523.1,427.2 L541.7,429.4 M572.8,394.6 L569.8,433.9 L592.0,436.1 L592.8,435.3 L610.6,437.6 L614.3,411.6 L618.7,410.9 L614.3,447.2 M563.9,408.7 L569.8,409.4 M563.9,408.7 L561.7,433.1 L569.8,433.9 M586.1,437.6 L586.1,442.7 L609.8,445.7 L610.6,437.6 M615.7,400.5 L615.0,405.7 L629.1,406.4 L627.6,419.0 M632.0,386.4 L646.9,388.7 L643.9,419.8 L651.3,421.3 L649.1,445.0 L650.6,446.4 M632.0,386.4 L629.8,406.4 M675.0,382.0 L670.6,422.7 L706.9,427.9 L706.9,432.4 M674.3,393.9 L684.6,394.6 L685.4,397.6 L709.1,400.5 L709.1,396.1 L715.0,396.1 M713.5,463.5 L709.8,484.2 L715.0,485.7 M543.1,492.4 L549.1,507.0 M592.0,507.0 L592.0,500.5 L620.2,502.7 L619.4,507.0 M610.6,493.1 L609.8,507.0 M623.9,493.1 L623.1,507.0 M642.4,500.5 L666.9,503.5 L666.1,507.0 M552.0,507.0 L552.8,504.2 L570.6,505.0 L571.3,507.0 M705.0,439.0 L767.2,425.7 L808.7,422.0 L847.2,423.5 L897.6,428.7 M765.0,382.0 L759.8,421.3 M735.4,382.0 L732.4,426.4 M705.0,399.8 L733.1,403.5 M708.0,400.5 L708.7,396.1 L715.4,396.8 L715.4,401.3 M722.0,402.0 L722.8,398.3 L733.1,399.8 M850.2,382.0 L850.2,385.7 L874.6,388.7 L875.4,385.7 L886.5,386.4 L882.8,421.3 M887.2,382.0 L886.5,386.4 M780.6,417.6 L782.0,412.4 L815.4,410.9 L815.4,416.1 M723.5,462.7 L723.5,453.1 L720.6,449.9 M723.5,462.7 L721.3,465.7 L711.7,464.2 L709.4,482.7 L713.9,485.7 L746.5,488.7 L756.1,485.7 L756.9,487.2 L793.9,490.1 L799.8,453.9 L774.6,454.6 L775.4,462.0 L759.8,460.5 L743.5,459.0 L742.8,464.2 L723.5,462.7 M759.8,460.5 L756.1,487.2 M774.6,454.6 L775.4,446.4 L807.2,442.7 L807.2,437.1 M811.7,437.1 L814.6,454.6 L819.8,459.0 L828.7,461.3 L826.5,473.9 L845.7,479.0 L861.3,483.5 L866.5,454.6 L832.4,449.4 L830.9,453.1 L826.5,450.1 L823.5,437.6 M830.9,437.6 L832.4,449.4 M839.1,438.0 L837.6,449.4 M887.2,449.4 L898.3,450.1 M898.3,482.7 L893.9,486.4 L898.3,490.9 M381.3,507.0 L416.9,520.3 L433.1,531.4 L442.0,544.0 M421.3,507.0 L428.7,510.7 L440.6,510.0 L443.5,507.0 M453.9,561.8 L448.0,567.7 L411.7,571.4 L380.6,603.3 L377.6,618.9 M411.7,571.4 L408.0,592.2 L445.0,595.9 L442.0,618.1 L435.4,616.6 L439.1,598.9 L410.9,592.6 M408.0,592.2 L405.7,618.9 M407.2,612.2 L425.7,615.1 L425.7,618.9 M446.5,618.9 L450.2,594.4 L455.4,585.5 L459.8,581.1 L468.7,581.8 M525.0,579.6 L498.3,578.9 L491.7,587.0 L492.4,592.9 M524.3,507.0 L521.3,531.4 L525.0,531.4 M525.0,535.1 L520.6,535.9 L519.1,544.8 L525.0,546.3 M515.0,579.3 L633.5,587.0 L692.8,591.1 L715.0,592.6 M524.6,507.0 L521.7,530.7 L558.0,535.1 L559.4,527.0 L578.7,530.0 M559.4,527.0 L560.2,524.0 L569.8,524.5 L572.0,507.0 M537.2,507.0 L559.4,509.2 L560.2,507.0 M520.9,535.1 L535.7,536.6 L534.3,546.7 L519.4,544.8 L520.9,535.1 M591.3,507.0 L590.6,519.6 L601.7,520.6 L600.9,535.1 L626.9,538.4 L629.1,526.3 L632.8,526.3 L633.5,514.4 L623.1,512.9 L623.9,507.0 M606.9,507.0 L606.1,511.4 L623.1,512.9 M620.2,507.0 L619.4,512.9 M666.1,507.0 L665.4,517.4 L673.5,518.1 L674.3,524.0 L698.7,527.0 M665.4,517.4 L664.6,522.6 L655.0,523.3 L652.8,542.6 L664.6,543.7 L665.4,541.4 L669.8,542.3 L668.3,554.4 L679.4,555.6 L683.1,526.3 M703.9,507.0 L701.7,527.0 L715.0,528.5 M715.0,527.7 L710.6,528.5 L709.1,543.3 L715.0,543.3 M634.3,587.0 L639.4,596.6 L629.1,595.9 L629.8,592.2 L595.7,590.7 L594.3,604.8 L588.3,605.5 L587.6,617.4 L609.1,618.4 M639.4,596.6 L674.3,598.9 L673.5,618.9 M639.4,596.6 L640.2,603.3 L690.6,606.6 M667.6,604.8 L666.1,618.9 M573.5,592.2 L583.9,592.6 L588.3,597.4 L586.9,602.6 L583.9,603.3 L584.6,617.4 L572.8,617.4 L572.0,610.7 L573.5,592.2 M698.7,596.6 L704.6,596.6 L709.1,601.8 L708.3,612.2 L703.9,615.9 L698.7,615.1 L696.5,610.7 L697.2,599.6 L698.7,596.6 M705.0,591.4 L744.3,595.1 L745.0,604.0 L760.6,605.5 L759.8,618.9 M744.3,595.1 L760.6,597.4 M733.1,604.0 L744.3,604.0 M733.1,604.0 L724.3,618.9 M727.2,618.9 L728.7,611.4 M780.6,588.5 L777.6,618.9 M705.0,527.0 L710.2,527.7 L708.7,543.3 L733.9,545.5 L734.6,540.3 L752.4,542.3 L753.9,536.6 L724.3,533.7 L723.5,544.0 M710.2,527.7 L715.4,513.7 L739.1,516.2 L739.8,518.9 L745.7,518.9 L746.5,511.4 L759.8,512.6 M745.7,518.9 L757.6,521.1 L756.1,536.6 M745.0,507.0 L772.4,510.7 M772.4,513.7 L824.3,517.4 L821.3,545.5 M772.4,513.7 L773.9,516.6 L776.1,520.3 L799.1,522.6 L799.8,525.5 L815.4,526.3 L813.9,542.6 L793.9,541.4 L792.4,552.9 L777.6,551.4 L776.9,554.4 L756.9,552.2 M776.1,520.3 L770.2,533.7 L773.9,534.4 L768.7,552.9 M836.1,525.5 L876.9,530.0 L875.4,549.2 L868.0,550.0 L868.0,557.4 L874.6,558.1 M836.1,525.5 L834.6,546.3 L826.5,544.8 L827.2,532.2 L834.6,532.9 M820.6,545.5 L832.4,546.3 L830.9,555.9 L840.6,557.4 L841.3,552.2 L854.6,553.7 L856.1,548.5 L875.4,549.2 M860.6,529.2 L862.0,532.2 L867.2,532.2 L867.2,530.0 M878.3,546.3 L898.3,547.7 M898.3,511.4 L892.4,515.9 L898.3,523.3 M897.6,561.8 L894.6,561.1 L885.0,567.7 L896.9,581.1 M884.3,617.4 L899.1,618.4 M880.6,507.0 L879.1,512.2 L878.3,546.3 M805.7,579.6 L812.4,580.3 L811.7,589.2 L804.3,588.2 L805.7,579.6 M332.4,487.1 L385.7,496.0" stroke="#d8d8d8"/><path d="M372.1,269.7 L369.4,293.9 L449.4,302.0 M467.2,269.4 L449.4,302.0 L441.3,316.8 L419.8,353.9 L412.4,368.7 L407.2,387.0 M453.9,315.3 L449.4,318.3 L443.5,327.2 L428.7,353.9 L421.3,372.4 L417.6,387.0 M485.0,269.4 L479.1,313.9 M453.9,315.3 L525.0,322.0 M515.0,320.5 L628.3,333.9 L663.9,337.9 L664.6,329.4 L715.0,335.3 M633.5,269.7 L628.3,333.9 M663.9,337.9 L658.0,387.0 M705.0,333.9 L767.2,340.5 L762.0,387.0 M785.7,269.4 L777.6,336.1 L770.9,387.0 M842.8,269.4 L834.6,334.6 L888.7,345.0 L897.6,345.7 M842.8,335.3 L838.3,387.0 M850.2,270.1 L897.6,276.1 M897.6,276.1 L895.4,282.7 L888.7,345.0 M898.3,338.3 L893.1,387.0 M332.4,390.1 L392.4,397.6 L404.3,399.0 M392.4,397.6 L392.4,411.6 L402.8,412.4 M408.7,382.0 L405.0,398.3 L402.8,412.4 L397.6,453.1 L393.9,490.9 L390.9,495.3 L385.7,496.8 L332.4,488.7 M419.8,382.0 L413.9,407.2 L410.2,430.9 L405.0,462.7 L404.3,493.1 L408.7,499.0 L439.1,498.3 L465.7,490.1 L525.0,475.3 M410.2,430.9 L525.0,444.2 M419.8,498.3 L427.2,507.0 M477.6,507.0 L525.0,496.1 M515.0,442.7 L618.7,453.9 M515.0,478.3 L618.7,453.9 L650.6,446.4 L715.0,431.6 M715.0,451.6 L609.8,476.1 L606.9,478.3 L609.8,483.0 L642.4,486.4 L702.4,493.1 L715.0,494.6 M515.0,499.0 L564.6,487.2 L584.6,482.0 L609.8,483.0 M584.6,482.0 L581.7,507.0 M642.4,486.4 L640.9,507.0 M702.4,492.4 L700.9,507.0 M658.7,382.0 L650.6,446.4 M705.0,433.9 L757.6,422.0 L768.7,420.2 L808.7,416.4 L835.4,417.3 L890.9,422.0 L898.3,422.3 M705.0,454.6 L764.3,441.3 L808.7,436.8 L847.2,438.0 L887.2,442.0 L898.3,442.7 M772.4,382.0 L768.0,420.2 M763.5,382.0 L757.6,422.0 M839.5,382.0 L836.1,417.3 M894.6,382.0 L890.9,422.0 M810.2,436.8 L803.5,503.5 M887.2,442.0 L880.6,507.0 M705.0,493.1 L761.3,499.8 L803.5,503.5 L830.9,507.0 M372.4,507.0 L408.0,515.9 L428.7,529.2 L446.5,548.5 L494.6,618.9 M428.7,507.0 L455.4,536.6 L461.3,546.3 L511.7,618.9 M479.1,507.0 L462.8,514.4 L455.4,524.8 L455.4,535.9 M400.6,514.4 L402.0,618.9 M476.1,567.7 L525.0,571.4 M515.0,570.4 L575.0,574.4 L633.5,578.4 L693.5,582.6 L715.0,584.0 M582.0,507.0 L575.0,574.4 M640.9,507.0 L633.5,578.4 M700.9,507.0 L693.5,582.6 L690.6,618.9 M705.0,583.3 L753.9,587.0 L812.4,590.7 L871.7,595.1 M761.3,507.0 L753.9,587.0 M821.3,507.0 L812.4,590.7 M881.3,507.0 L877.6,523.3 L871.7,595.1 L868.7,618.9 M785.7,588.5 L782.8,618.9 M830.2,507.0 L878.3,512.2 M877.6,521.8 L897.6,524.0 M873.1,579.6 L897.6,581.1 M332.4,499.8 L388.6,510.2 L401.9,516.1 L413.8,520.5 L424.1,525.6" stroke="#10e4ec"/><circle cx="602.9" cy="287.2" r="5.6" stroke="#d8d8d8"/><circle cx="578.4" cy="469.1" r="1.2" stroke="#d8d8d8"/><circle cx="767.2" cy="425.7" r="1.2" stroke="#d8d8d8"/><circle cx="893.1" cy="428.2" r="1.2" stroke="#d8d8d8"/></g><g font-family="Liberation Sans"><text transform="translate(434.6,340.5) rotate(-61)" x="0" y="0" font-size="10" fill="#bdbdbd" text-anchor="middle" dominant-baseline="middle">Exercitation</text><text x="456.1" y="319.8" font-size="8.6" fill="#d86e10">52563284</text><text x="641.7" y="350.9" font-size="9.2" fill="#c8c800">548</text><text x="718.3" y="298.7" font-size="9.2" fill="#c8c800">445</text><text x="708.0" y="359.0" font-size="9.2" fill="#c8c800">1931</text><text x="841.3" y="327.2" font-size="9.2" fill="#c8c800">2360</text><text x="390.2" y="408.7" font-size="9.2" fill="#c8c800">1580</text><text x="349.4" y="464.7" font-size="9.2" fill="#c8c800">2546</text><text x="448.7" y="458.7" font-size="9.2" fill="#c8c800">1549</text><text transform="translate(403.5,442.0) rotate(82)" x="0" y="0" font-size="9.2" fill="#c8c800" text-anchor="middle" dominant-baseline="middle">43506</text><text x="580.9" y="463.2" font-size="8.6" fill="#d86e10">52563692</text><text transform="translate(638.0,463.2) rotate(-15)" x="0" y="0" font-size="9.2" fill="#c8c800" text-anchor="middle" dominant-baseline="middle">43505</text><text x="664.6" y="479.3" font-size="9.2" fill="#c8c800">1612</text><text transform="translate(702.4,447.2) rotate(-16)" x="0" y="0" font-size="10.4" fill="#bdbdbd" text-anchor="middle" dominant-baseline="middle">Magna Aliqua</text><text x="773.1" y="430.6" font-size="8.6" fill="#d86e10">52563693</text><text x="853.1" y="432.4" font-size="8.6" fill="#d86e10">52563694</text><text x="855.4" y="408.7" font-size="9.2" fill="#c8c800">1614</text><text x="836.9" y="496.8" font-size="9.2" fill="#c8c800">1810</text><text x="882.0" y="499.8" font-size="9.2" fill="#c8c800">2506</text><text transform="translate(731.7,502.0) rotate(6)" x="0" y="0" font-size="10" fill="#bdbdbd" text-anchor="middle" dominant-baseline="middle">Laboris Nisi</text><text x="385.7" y="516.6" font-size="8.6" fill="#d86e10">52563236</text><text x="488.7" y="544.3" font-size="9.2" fill="#c8c800">1703</text><text x="465.0" y="617.4" font-size="9.2" fill="#c8c800">1953</text><text transform="translate(491.7,603.3) rotate(57)" x="0" y="0" font-size="10" fill="#bdbdbd" text-anchor="middle" dominant-baseline="middle">Minim Veniam</text><text x="599.4" y="559.6" font-size="9.2" fill="#c8c800">1705</text><text x="655.7" y="568.5" font-size="9.2" fill="#c8c800">1706</text><text x="549.8" y="608.9" font-size="9.2" fill="#c8c800">555</text><text x="719.8" y="567.7" font-size="9.2" fill="#c8c800">1707</text><text x="776.1" y="574.4" font-size="9.2" fill="#c8c800">1708</text><text x="836.1" y="576.6" font-size="9.2" fill="#c8c800">552</text><text x="876.9" y="559.6" font-size="9.2" fill="#c8c800">550</text></g></svg>
<svg class="a" style="left:1255px;top:640px;" width="100" height="100" viewBox="0 0 100 100"><defs><filter id="bl" x="-20%" y="-20%" width="140%" height="140%"><feGaussianBlur stdDeviation="0.6"/></filter></defs><g filter="url(#bl)" fill="none"><circle cx="50" cy="49.8" r="38" stroke="#a3b6ca" stroke-width="2.2"/><circle cx="50" cy="49.8" r="35.8" stroke="#b4c4d6" stroke-width="2"/><circle cx="50" cy="49.8" r="33.6" stroke="#d2dde8" stroke-width="2"/><circle cx="50" cy="49.8" r="31.5" stroke="#f4f7fa" stroke-width="2" opacity="0.7"/></g><path d="M0,0 L0,15.5 L3.8,11.8 L6.6,18 L9.2,16.8 L6.5,10.8 L11.4,10.8 Z" transform="translate(50.5,50.5) scale(1.2,1.42)" fill="#fff" stroke="#111" stroke-width="0.9" stroke-linejoin="round"/></svg></body></html>
